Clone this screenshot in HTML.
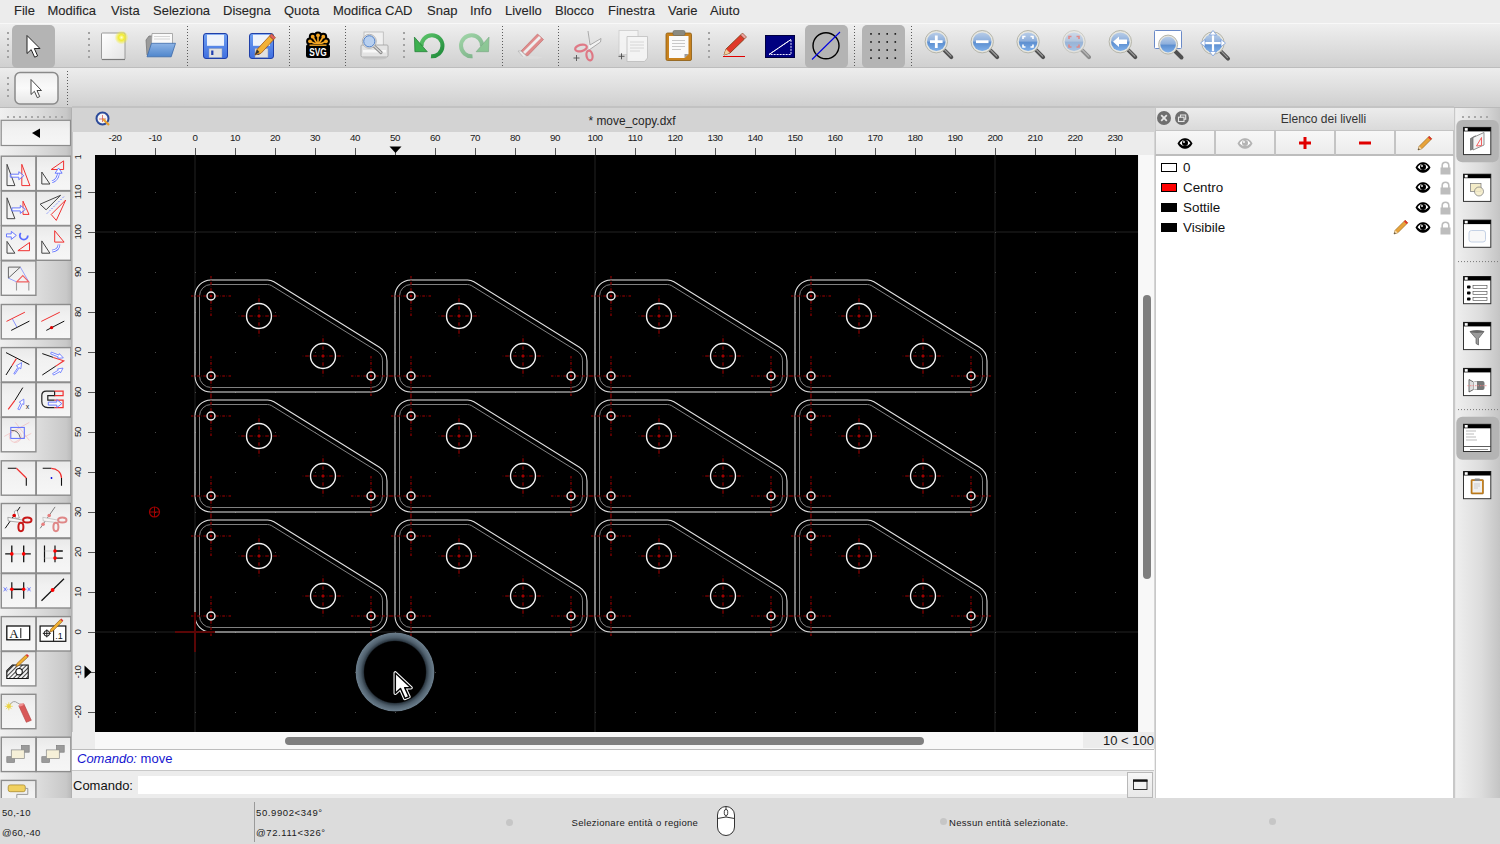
<!DOCTYPE html>
<html><head><meta charset="utf-8">
<style>
*{margin:0;padding:0;box-sizing:border-box}
html,body{width:1500px;height:844px;overflow:hidden;background:#ececec;font-family:"Liberation Sans",sans-serif;color:#222}
.a{position:absolute}
.menu{left:0;top:0;width:1500px;height:23px;background:#ececec}
.menu span{position:absolute;top:3px;font-size:13px;color:#262626;line-height:16px;-webkit-text-stroke:0.1px #262626}
.tb1{left:0;top:23px;width:1500px;height:45px;background:linear-gradient(#efefef,#e4e4e4 35%,#d0d0d0);border-top:1px solid #f8f8f8;border-bottom:1px solid #bdbdbd}
.tb2{left:0;top:68px;width:1500px;height:40px;background:linear-gradient(#ededed,#e0e0e0 45%,#cfcfcf);border-bottom:1px solid #bababa}
.sel{background:#b4b4b4;border-radius:5px}
.vsep{width:0;border-left:2px dotted #707070}
.grip{width:3px;background:radial-gradient(circle,#9a9a9a 1px,transparent 1.3px) 0 0/3px 6px}
.ldock{left:0;top:108px;width:72px;height:690px;background:linear-gradient(90deg,#efefef,#dcdcdc 60%,#c9c9c9)}
.lbtn{position:absolute;width:35px;height:35px;border:1.5px solid #8e8e8e;background:linear-gradient(#f3f3f3,#fbfbfb 45%,#ececec)}
.mdi{left:72px;top:108px;width:1083px;height:690px;background:#ececec}
.status{left:0;top:798px;width:1500px;height:46px;background:#dcdcdc;font-size:10.5px;color:#1a1a1a}
.rdock{left:1454px;top:108px;width:46px;height:690px;background:linear-gradient(90deg,#ededed,#dedede 50%,#cfcfcf);border-left:1px solid #cfcfcf}
.ldk{left:1155px;top:108px;width:299px;height:690px;background:#fff;border-left:1px solid #c8c8c8}
</style></head><body>
<div class="a menu">
<span style="left:14px">File</span><span style="left:47.5px">Modifica</span><span style="left:111px">Vista</span><span style="left:153px">Seleziona</span><span style="left:223px">Disegna</span><span style="left:284px">Quota</span><span style="left:333px">Modifica CAD</span><span style="left:427px">Snap</span><span style="left:470px">Info</span><span style="left:505px">Livello</span><span style="left:555px">Blocco</span><span style="left:608px">Finestra</span><span style="left:668px">Varie</span><span style="left:710px">Aiuto</span>
</div>
<div class="a tb1"></div>
<div class="a tb2"></div>
<svg class="a" style="left:0;top:0" width="1500" height="110">
<defs>
<linearGradient id="lens" x1="0" y1="0" x2="0" y2="1"><stop offset="0" stop-color="#b8cde8"/><stop offset="0.45" stop-color="#8fb0dc"/><stop offset="0.55" stop-color="#5d8fd0"/><stop offset="1" stop-color="#7fb0ea"/></linearGradient>
<linearGradient id="page" x1="0" y1="0" x2="1" y2="1"><stop offset="0" stop-color="#ffffff"/><stop offset="1" stop-color="#e4e4e4"/></linearGradient>
<linearGradient id="flop" x1="0" y1="0" x2="0" y2="1"><stop offset="0" stop-color="#6f9ff0"/><stop offset="1" stop-color="#3f6fe0"/></linearGradient>
<linearGradient id="folder" x1="0" y1="0" x2="0" y2="1"><stop offset="0" stop-color="#8fb5e6"/><stop offset="1" stop-color="#4f86cc"/></linearGradient>
<linearGradient id="undo" x1="0" y1="0" x2="1" y2="1"><stop offset="0" stop-color="#5cc46a"/><stop offset="1" stop-color="#1f8a3a"/></linearGradient>
<radialGradient id="sun" cx="0.5" cy="0.5" r="0.5"><stop offset="0" stop-color="#ffffd0"/><stop offset="0.4" stop-color="#f2ec30"/><stop offset="1" stop-color="#f2ec30" stop-opacity="0"/></radialGradient>
</defs>
<rect x="12" y="25" width="43" height="43" rx="5" fill="#b4b4b4"/>
<rect x="805" y="25" width="43" height="43" rx="5" fill="#b4b4b4"/>
<rect x="862" y="25" width="43" height="43" rx="5" fill="#b4b4b4"/>
<rect x="7" y="32" width="2" height="2" fill="#a2a2a2"/><rect x="7" y="38" width="2" height="2" fill="#a2a2a2"/><rect x="7" y="44" width="2" height="2" fill="#a2a2a2"/><rect x="7" y="50" width="2" height="2" fill="#a2a2a2"/><rect x="7" y="56" width="2" height="2" fill="#a2a2a2"/>
<rect x="88" y="32" width="2" height="2" fill="#a2a2a2"/><rect x="88" y="38" width="2" height="2" fill="#a2a2a2"/><rect x="88" y="44" width="2" height="2" fill="#a2a2a2"/><rect x="88" y="50" width="2" height="2" fill="#a2a2a2"/><rect x="88" y="56" width="2" height="2" fill="#a2a2a2"/>
<rect x="403" y="32" width="2" height="2" fill="#a2a2a2"/><rect x="403" y="38" width="2" height="2" fill="#a2a2a2"/><rect x="403" y="44" width="2" height="2" fill="#a2a2a2"/><rect x="403" y="50" width="2" height="2" fill="#a2a2a2"/><rect x="403" y="56" width="2" height="2" fill="#a2a2a2"/>
<rect x="708" y="32" width="2" height="2" fill="#a2a2a2"/><rect x="708" y="38" width="2" height="2" fill="#a2a2a2"/><rect x="708" y="44" width="2" height="2" fill="#a2a2a2"/><rect x="708" y="50" width="2" height="2" fill="#a2a2a2"/><rect x="708" y="56" width="2" height="2" fill="#a2a2a2"/>
<line x1="187.5" y1="26" x2="187.5" y2="66" stroke="#5a5a5a" stroke-width="1" stroke-dasharray="1 2"/>
<line x1="289.5" y1="26" x2="289.5" y2="66" stroke="#5a5a5a" stroke-width="1" stroke-dasharray="1 2"/>
<line x1="345.5" y1="26" x2="345.5" y2="66" stroke="#5a5a5a" stroke-width="1" stroke-dasharray="1 2"/>
<line x1="502.5" y1="26" x2="502.5" y2="66" stroke="#5a5a5a" stroke-width="1" stroke-dasharray="1 2"/>
<line x1="558.5" y1="26" x2="558.5" y2="66" stroke="#5a5a5a" stroke-width="1" stroke-dasharray="1 2"/>
<line x1="854.5" y1="26" x2="854.5" y2="66" stroke="#5a5a5a" stroke-width="1" stroke-dasharray="1 2"/>
<line x1="911.5" y1="26" x2="911.5" y2="66" stroke="#5a5a5a" stroke-width="1" stroke-dasharray="1 2"/>
<path d="M27 35.5V53.5L31.2 49.6L34.6 57.2L37.6 55.9L34.3 48.5H40Z" fill="#fff" stroke="#222" stroke-width="1" stroke-linejoin="round"/>
<rect x="101.5" y="33" width="23.5" height="26.5" rx="1" fill="url(#page)" stroke="#9a9a9a" stroke-width="1"/>
<path d="M102 59.5H125" stroke="#7a7a7a" stroke-width="1.2"/>
<circle cx="121.5" cy="37.5" r="7" fill="url(#sun)"/>
<path d="M146 40L149 36H158L160 38.5H171V55H147Z" fill="#9a9a9a" stroke="#777" stroke-width="0.8"/>
<path d="M152 33.5H172.5V52H151Z" fill="#fafafa" stroke="#999" stroke-width="0.8"/>
<path d="M154 36.5H170M154 39H170" stroke="#ccc" stroke-width="0.8"/>
<path d="M147 56.8L151.5 43.3H175.5L171.2 56.8Z" fill="url(#folder)" stroke="#3c6aa8" stroke-width="0.8"/>
<rect x="203.5" y="33.5" width="24" height="25" rx="2.5" fill="url(#flop)" stroke="#1f3fa8" stroke-width="1"/><rect x="207" y="34.8" width="17" height="11" fill="#eef3fb"/><rect x="209" y="48.5" width="13" height="9" fill="#e0e0e0" stroke="#8a9ab8" stroke-width="0.5"/><rect x="211.2" y="50.5" width="2.2" height="4.5" fill="#2040b0"/>
<rect x="249.5" y="33.5" width="24" height="25" rx="2.5" fill="url(#flop)" stroke="#1f3fa8" stroke-width="1"/><rect x="253" y="34.8" width="17" height="11" fill="#eef3fb"/><rect x="255" y="48.5" width="13" height="9" fill="#e0e0e0" stroke="#8a9ab8" stroke-width="0.5"/><rect x="257.2" y="50.5" width="2.2" height="4.5" fill="#2040b0"/>
<path d="M255 55L257 49.5L269.5 36L273.5 39.8L261 53.3Z" fill="#f2b136" stroke="#9a4a00" stroke-width="0.7"/><path d="M269.5 36L271.5 33.8L275.5 37.6L273.5 39.8Z" fill="#e06060" stroke="#9a4a00" stroke-width="0.6"/><path d="M255 55L257 49.5L259.5 52Z" fill="#333"/>
<g stroke="#000" stroke-width="2.6" stroke-linejoin="round"><path d="M318 45L310 41.3M318 45L312.7 36.7M318 45V35.3M318 45L323.3 36.7M318 45L326 41.3" stroke="#000" stroke-width="4.6" stroke-linecap="round"/><circle cx="310" cy="41.3" r="2.6" fill="#000"/><circle cx="312.7" cy="36.7" r="2.6" fill="#000"/><circle cx="318" cy="35.3" r="2.6" fill="#000"/><circle cx="323.3" cy="36.7" r="2.6" fill="#000"/><circle cx="326" cy="41.3" r="2.6" fill="#000"/></g>
<path d="M318 45L310 41.3M318 45L312.7 36.7M318 45V35.3M318 45L323.3 36.7M318 45L326 41.3" stroke="#f5a623" stroke-width="1.6" stroke-linecap="round"/><circle cx="310" cy="41.3" r="1.9" fill="#f5a623"/><circle cx="312.7" cy="36.7" r="1.9" fill="#f5a623"/><circle cx="318" cy="35.3" r="1.9" fill="#f5a623"/><circle cx="323.3" cy="36.7" r="1.9" fill="#f5a623"/><circle cx="326" cy="41.3" r="1.9" fill="#f5a623"/>
<path d="M306 46.5Q306 44 309 44H327Q330 44 330 46.5V55.5Q330 58 327 58H309Q306 58 306 55.5Z" fill="#000"/>
<path d="M309.5 45.2H326.5" stroke="#f5a623" stroke-width="1.4"/>
<text x="318" y="56" text-anchor="middle" font-family="Liberation Sans" font-weight="bold" font-size="10.5" fill="#fff" textLength="17.5" lengthAdjust="spacingAndGlyphs">SVG</text>
<rect x="364" y="32" width="19.3" height="14" fill="#f0f0f0" stroke="#b8b8b8" stroke-width="0.8"/>
<path d="M361 46Q361 45 362 45H387Q388 45 388 46V55.5Q388 57 386.5 57H362.5Q361 57 361 55.5Z" fill="#e4e4e4" stroke="#a0a0a0" stroke-width="0.8"/>
<rect x="363" y="50" width="23" height="2.5" fill="#f8f8f8"/><ellipse cx="374.5" cy="58.3" rx="12" ry="1.2" fill="#bbb" opacity="0.6"/>
<path d="M374.3 46.3L381 52.5" stroke="#888" stroke-width="3.2" stroke-linecap="round"/><path d="M374.3 46.3L381 52.5" stroke="#d8d8d8" stroke-width="1.2" stroke-linecap="round"/>
<circle cx="369.3" cy="41.3" r="7" fill="#e8e8e8" stroke="#a8a8a8" stroke-width="0.8"/><circle cx="369.3" cy="41.3" r="5.6" fill="#b8d0f0" stroke="#5080c8" stroke-width="1"/>
<path d="M421.5 46.5A10.5 10.5 0 1 1 431 56.2" fill="none" stroke="url(#undo)" stroke-width="4"/>
<path d="M414.4 37.1L414.9 51.7L427.3 51.7Z" fill="#3cb04e" stroke="#1f7a33" stroke-width="0.7" stroke-linejoin="round"/>
<g opacity="0.5"><path d="M482 46.5A10.5 10.5 0 1 0 472.5 56.2" fill="none" stroke="url(#undo)" stroke-width="4"/><path d="M489 37.1L488.5 51.7L476.2 51.7Z" fill="#3cb04e" stroke="#1f7a33" stroke-width="0.7" stroke-linejoin="round"/></g>
<g opacity="0.75"><path d="M521 51L537.5 34L543.5 39.5L527 56.5Z" fill="#e07070" stroke="#b04040" stroke-width="0.6"/><path d="M523 52L539 36L541 38L525 54Z" fill="#f4f4f4"/><path d="M518 51L521 51L527 56.5L524 58Z" fill="#f0f0f0" stroke="#999" stroke-width="0.6"/><ellipse cx="531" cy="57.5" rx="11" ry="1.5" fill="#ddd"/></g>
<g opacity="0.8"><path d="M588 31L590 45L601 38.5L600.5 42L589 50" fill="#f8f8f8" stroke="#888" stroke-width="0.8"/><ellipse cx="581" cy="48" rx="6" ry="3.2" transform="rotate(-15 581 48)" fill="none" stroke="#e06070" stroke-width="2.2"/><ellipse cx="589.5" cy="55.5" rx="3" ry="5" transform="rotate(-10 589.5 55.5)" fill="none" stroke="#e06070" stroke-width="2.2"/><path d="M573.5 58H579.5M576.5 55V61" stroke="#333" stroke-width="0.9"/></g>
<g opacity="0.85"><rect x="619" y="30.5" width="19" height="24" fill="#f6f6f6" stroke="#c8c8c8" stroke-width="0.8"/><path d="M627 36.5H647.5V58L644.5 61.5H627Z" fill="#f8f8f8" stroke="#b8b8b8" stroke-width="0.8"/><path d="M630 42H644M630 45H644M630 48H644M630 51H640" stroke="#ccc" stroke-width="0.8"/><path d="M618.5 56.3H624.5M621.5 53.3V59.3" stroke="#333" stroke-width="0.9"/></g>
<rect x="666" y="33" width="25.5" height="27.5" rx="1.5" fill="#c8821e" stroke="#8a5a10" stroke-width="0.8"/><path d="M669 36H688.5V54L684.5 58H669Z" fill="#fafafa"/><path d="M684.5 58L688.5 54H684.5Z" fill="#9a9a9a"/><path d="M672 40.5H685M672 43.5H685M672 46.5H685M672 49.5H681" stroke="#bbb" stroke-width="0.8"/><rect x="673" y="30.5" width="12" height="5" rx="1.5" fill="#8a8a80" stroke="#6a6a60" stroke-width="0.6"/>
<path d="M724 55L726 49L740.5 35L744.5 39L730 53Z" fill="#e03a2a" stroke="#7a3a10" stroke-width="0.8"/><path d="M740.5 35L742.5 33L746.5 37L744.5 39Z" fill="#f0a0a0" stroke="#7a3a10" stroke-width="0.6"/><path d="M724 55L726 49L730 53Z" fill="#f0d0a0"/><path d="M723 56.5H745" stroke="#e00000" stroke-width="1"/>
<rect x="765.5" y="35.5" width="29" height="22" fill="#000080" stroke="#000040" stroke-width="1"/><path d="M769 54.5L791 39.5V54.5Z" fill="none" stroke="#e8e8ff" stroke-width="1" stroke-dasharray="2 1"/><path d="M769 54.5L791 39.5" stroke="#fff" stroke-width="1"/>
<circle cx="826" cy="45.7" r="13" fill="none" stroke="#000" stroke-width="1.4"/><path d="M812 59.5L840 32" stroke="#0000e0" stroke-width="1.1"/>
<rect x="870.2" y="33.1" width="1.6" height="1.6" fill="#111"/>
<rect x="870.2" y="41.17" width="1.6" height="1.6" fill="#111"/>
<rect x="870.2" y="49.24" width="1.6" height="1.6" fill="#111"/>
<rect x="870.2" y="57.31" width="1.6" height="1.6" fill="#111"/>
<rect x="878.3000000000001" y="33.1" width="1.6" height="1.6" fill="#111"/>
<rect x="878.3000000000001" y="41.17" width="1.6" height="1.6" fill="#111"/>
<rect x="878.3000000000001" y="49.24" width="1.6" height="1.6" fill="#111"/>
<rect x="878.3000000000001" y="57.31" width="1.6" height="1.6" fill="#111"/>
<rect x="886.4000000000001" y="33.1" width="1.6" height="1.6" fill="#111"/>
<rect x="886.4000000000001" y="41.17" width="1.6" height="1.6" fill="#111"/>
<rect x="886.4000000000001" y="49.24" width="1.6" height="1.6" fill="#111"/>
<rect x="886.4000000000001" y="57.31" width="1.6" height="1.6" fill="#111"/>
<rect x="894.5" y="33.1" width="1.6" height="1.6" fill="#111"/>
<rect x="894.5" y="41.17" width="1.6" height="1.6" fill="#111"/>
<rect x="894.5" y="49.24" width="1.6" height="1.6" fill="#111"/>
<rect x="894.5" y="57.31" width="1.6" height="1.6" fill="#111"/>
<g><path d="M944.3 50.2 L951.3 57.2" stroke="#505050" stroke-width="4" stroke-linecap="round"/><path d="M944.8 50.0 L950.8 56.2" stroke="#9a9a9a" stroke-width="1.2" stroke-linecap="round"/><circle cx="936.3" cy="41.7" r="11.2" fill="#e6e6e0" stroke="#b5b5aa" stroke-width="1"/><circle cx="936.3" cy="41.7" r="9.3" fill="url(#lens)"/><path d="M936.3 35.5V48M930 41.7H942.6" stroke="#fff" stroke-width="2.8"/></g>
<g><path d="M990.2 50.2 L997.2 57.2" stroke="#505050" stroke-width="4" stroke-linecap="round"/><path d="M990.7 50.0 L996.7 56.2" stroke="#9a9a9a" stroke-width="1.2" stroke-linecap="round"/><circle cx="982.2" cy="41.7" r="11.2" fill="#e6e6e0" stroke="#b5b5aa" stroke-width="1"/><circle cx="982.2" cy="41.7" r="9.3" fill="url(#lens)"/><path d="M976 41.7H988.5" stroke="#fff" stroke-width="2.8"/></g>
<g><path d="M1036.1 50.2 L1043.1 57.2" stroke="#505050" stroke-width="4" stroke-linecap="round"/><path d="M1036.6 50.0 L1042.6 56.2" stroke="#9a9a9a" stroke-width="1.2" stroke-linecap="round"/><circle cx="1028.1" cy="41.7" r="11.2" fill="#e6e6e0" stroke="#b5b5aa" stroke-width="1"/><circle cx="1028.1" cy="41.7" r="9.3" fill="url(#lens)"/><path d="M1023 39V36.5H1025.5M1030.5 36.5H1033V39M1033 44.5V47H1030.5M1025.5 47H1023V44.5" fill="none" stroke="#fff" stroke-width="1.6"/></g>
<g opacity="0.55"><path d="M1082 50.2 L1089 57.2" stroke="#505050" stroke-width="4" stroke-linecap="round"/><path d="M1082.5 50.0 L1088.5 56.2" stroke="#9a9a9a" stroke-width="1.2" stroke-linecap="round"/><circle cx="1074" cy="41.7" r="11.2" fill="#e6e6e0" stroke="#b5b5aa" stroke-width="1"/><circle cx="1074" cy="41.7" r="9.3" fill="url(#lens)"/><path d="M1069 39V36.5H1071.5M1076.5 36.5H1079V39M1079 44.5V47H1076.5M1071.5 47H1069V44.5" fill="none" stroke="#e04040" stroke-width="1.6"/></g>
<g><path d="M1128.3 50.2 L1135.3 57.2" stroke="#505050" stroke-width="4" stroke-linecap="round"/><path d="M1128.8 50.0 L1134.8 56.2" stroke="#9a9a9a" stroke-width="1.2" stroke-linecap="round"/><circle cx="1120.3" cy="41.7" r="11.2" fill="#e6e6e0" stroke="#b5b5aa" stroke-width="1"/><circle cx="1120.3" cy="41.7" r="9.3" fill="url(#lens)"/><path d="M1113 41.7L1119 36.5V39.5H1127V44H1119V47Z" fill="#fff"/></g>
<rect x="1154.5" y="30.5" width="27" height="18" rx="1" fill="#fff" stroke="#6a8ac8" stroke-width="1"/>
<path d="M1175.5 51.5L1181.5 57.5" stroke="#505050" stroke-width="4" stroke-linecap="round"/>
<circle cx="1168.1" cy="44.6" r="9.5" fill="#e6e6e0" stroke="#b5b5aa" stroke-width="1"/><circle cx="1168.1" cy="44.6" r="7.8" fill="url(#lens)"/>
<g><path d="M1221 51.6 L1228 58.6" stroke="#505050" stroke-width="4" stroke-linecap="round"/><path d="M1221.5 51.400000000000006 L1227.5 57.6" stroke="#9a9a9a" stroke-width="1.2" stroke-linecap="round"/><circle cx="1213" cy="43.1" r="11.2" fill="#e6e6e0" stroke="#b5b5aa" stroke-width="1"/><circle cx="1213" cy="43.1" r="9.3" fill="url(#lens)"/><path d="M1213 32V54.5M1202 43.1H1224.5" stroke="#fff" stroke-width="2.2"/><path d="M1213 30.5L1209.5 35H1216.5ZM1213 56L1209.5 51.5H1216.5ZM1200.5 43.1L1205 39.6V46.6ZM1225.5 43.1L1221 39.6V46.6Z" fill="#fff" stroke="#5a8ad8" stroke-width="0.6"/></g>
<rect x="7" y="77" width="2" height="2" fill="#a2a2a2"/><rect x="7" y="83" width="2" height="2" fill="#a2a2a2"/><rect x="7" y="89" width="2" height="2" fill="#a2a2a2"/><rect x="7" y="95" width="2" height="2" fill="#a2a2a2"/>
<rect x="15" y="72.5" width="43" height="31.5" rx="5" fill="url(#tb2b)" stroke="#8a8a8a" stroke-width="1.5"/>
<defs><linearGradient id="tb2b" x1="0" y1="0" x2="0" y2="1"><stop offset="0" stop-color="#efefef"/><stop offset="0.5" stop-color="#fafafa"/><stop offset="1" stop-color="#e6e6e6"/></linearGradient></defs>
<path d="M31 79.5V94.5L34.4 91.3L37.3 97.7L39.7 96.6L37 90.5H41.5Z" fill="#fff" stroke="#333" stroke-width="0.9" stroke-linejoin="round"/>
<line x1="67.5" y1="71" x2="67.5" y2="105" stroke="#5a5a5a" stroke-width="1" stroke-dasharray="1 2"/>
</svg>
<div class="a ldock"></div>
<svg class="a" style="left:0;top:108px" width="72" height="690" viewBox="0 108 72 690">
<defs><linearGradient id="lbg" x1="0" y1="0" x2="0" y2="1"><stop offset="0" stop-color="#e9e9e9"/><stop offset="0.35" stop-color="#f1f1f1"/><stop offset="1" stop-color="#f6f6f6"/></linearGradient><linearGradient id="dockbg" x1="0" y1="0" x2="1" y2="0"><stop offset="0" stop-color="#f0f0f0"/><stop offset="0.5" stop-color="#dedede"/><stop offset="0.92" stop-color="#c8c8c8"/><stop offset="1" stop-color="#b8b8b8"/></linearGradient></defs>
<rect x="0" y="108" width="72" height="690" fill="url(#dockbg)"/>
<rect x="7" y="116" width="2" height="2" fill="#a8a8a8"/>
<rect x="13" y="116" width="2" height="2" fill="#a8a8a8"/>
<rect x="19" y="116" width="2" height="2" fill="#a8a8a8"/>
<rect x="25" y="116" width="2" height="2" fill="#a8a8a8"/>
<rect x="31" y="116" width="2" height="2" fill="#a8a8a8"/>
<rect x="37" y="116" width="2" height="2" fill="#a8a8a8"/>
<rect x="43" y="116" width="2" height="2" fill="#a8a8a8"/>
<rect x="49" y="116" width="2" height="2" fill="#a8a8a8"/>
<rect x="55" y="116" width="2" height="2" fill="#a8a8a8"/>
<rect x="61" y="116" width="2" height="2" fill="#a8a8a8"/>
<rect x="1.2" y="120.3" width="69.3" height="25.2" fill="url(#lbg)" stroke="#8c8c8c" stroke-width="1.2"/>
<path d="M32 133L40 128.5V138Z" fill="#000"/>
<rect x="1.3" y="156.2" width="34.6" height="34.4" fill="url(#lbg)" stroke="#8c8c8c" stroke-width="1.4"/>
<g transform="translate(1.3 156.2)"><path d="M5.7 8.1V29.4H13.6Z" fill="none" stroke="#444" stroke-width="1"/><path d="M20.5 8.1V29.4H28.6Z" fill="none" stroke="#f03030" stroke-width="1"/><path d="M9 18.0H17.5V15.5L22.5 19.5L17.5 23.5V21.0H9Z" fill="#fff" fill-opacity="0.6" stroke="#5a6cff" stroke-width="0.9" opacity="1"/></g>
<rect x="36.3" y="156.2" width="34.6" height="34.4" fill="url(#lbg)" stroke="#8c8c8c" stroke-width="1.4"/>
<g transform="translate(36.3 156.2)"><path d="M5.5 15.8V27.8H13.6Z" fill="none" stroke="#444" stroke-width="1"/><path d="M14.9 13.3L27.3 4.7V13.3Z" fill="none" stroke="#f03030" stroke-width="1"/><path d="M15.8 25.5Q21.5 24 22.3 16.5" fill="none" stroke="#5a6cff" stroke-width="2.6"/><path d="M15.8 25.5Q21.5 24 22.3 16.5" fill="none" stroke="#fff" stroke-width="1.2"/><path d="M18.8 17L22.3 11.8L25.8 17Z" fill="#fff" stroke="#5a6cff" stroke-width="0.9"/></g>
<rect x="1.3" y="191.1" width="34.6" height="34.4" fill="url(#lbg)" stroke="#8c8c8c" stroke-width="1.4"/>
<g transform="translate(1.3 191.1)"><path d="M5.7 6.7V27.6H13.6Z" fill="none" stroke="#444" stroke-width="1"/><path d="M21.7 10.1V23.3H27.7Z" fill="none" stroke="#f03030" stroke-width="1"/><path d="M10.6 16.8H19V14.3L24 18.3L19 22.3V19.8H10.6Z" fill="#fff" fill-opacity="0.6" stroke="#5a6cff" stroke-width="0.9" opacity="1"/></g>
<rect x="36.3" y="191.1" width="34.6" height="34.4" fill="url(#lbg)" stroke="#8c8c8c" stroke-width="1.4"/>
<g transform="translate(36.3 191.1)"><path d="M3.8 13.1L24.3 4.2L9.8 18.7Z" fill="none" stroke="#444" stroke-width="1"/><path d="M29.4 8.9L14.9 23.4L20 29.3Z" fill="none" stroke="#f03030" stroke-width="1"/><path d="M10.6 22.5L27.7 5.4" stroke="#5a6cff" stroke-width="0.9" stroke-dasharray="1.6 1.6"/></g>
<rect x="1.3" y="225.9" width="34.6" height="34.4" fill="url(#lbg)" stroke="#8c8c8c" stroke-width="1.4"/>
<g transform="translate(1.3 225.9)"><path d="M5.2 8.0H10V5.5L15 9.5L10 13.5V11.0H5.2Z" fill="#fff" fill-opacity="0.6" stroke="#5a6cff" stroke-width="0.9" opacity="1"/><circle cx="22.5" cy="9.7" r="4" fill="none" stroke="#5a6cff" stroke-width="1.8" stroke-dasharray="15 10"/><path d="M5.7 15.5V27.3H13.6Z" fill="none" stroke="#444" stroke-width="1"/><path d="M16.6 24.8L28.2 16.6V24.8Z" fill="none" stroke="#f03030" stroke-width="1"/></g>
<rect x="36.3" y="225.9" width="34.6" height="34.4" fill="url(#lbg)" stroke="#8c8c8c" stroke-width="1.4"/>
<g transform="translate(36.3 225.9)"><path d="M5.5 15V27.3H13.6Z" fill="none" stroke="#444" stroke-width="1"/><path d="M18.4 4.8V16.2H27.8Z" fill="none" stroke="#f03030" stroke-width="1"/><path d="M15.8 25.2Q22.7 24 22.7 18.5" fill="none" stroke="#5a6cff" stroke-width="2.6"/><path d="M15.8 25.2Q22.7 24 22.7 18.5" fill="none" stroke="#fff" stroke-width="1.1"/></g>
<rect x="1.3" y="260.9" width="34.6" height="34.4" fill="url(#lbg)" stroke="#8c8c8c" stroke-width="1.4"/>
<g transform="translate(1.3 260.9)"><path d="M7.1 6.2H19L7.1 17.2Z" fill="none" stroke="#666" stroke-width="1"/><path d="M19 6.2L27.5 21M7.1 17.2L15.4 21" stroke="#5a6cff" stroke-width="0.6"/><path d="M15.4 21L21.5 14.7L27.5 21Z" fill="none" stroke="#f06060" stroke-width="1.1"/><path d="M15.2 21.6V29.5M27.5 21.6V29.5" stroke="#999" stroke-width="1.1"/></g>
<rect x="1.3" y="304.5" width="34.6" height="34.4" fill="url(#lbg)" stroke="#8c8c8c" stroke-width="1.4"/>
<g transform="translate(1.3 304.5)"><path d="M5.2 16.9L23.6 7.7" stroke="#f03030" stroke-width="1"/><path d="M9.9 25.9L28.1 16.6" stroke="#111" stroke-width="1"/><path d="M11.1 14.4L15.6 22.6" stroke="#5a6cff" stroke-width="0.7"/></g>
<rect x="36.3" y="304.5" width="34.6" height="34.4" fill="url(#lbg)" stroke="#8c8c8c" stroke-width="1.4"/>
<g transform="translate(36.3 304.5)"><path d="M5 16.9L23.5 7.7" stroke="#f03030" stroke-width="1"/><path d="M10 25.9L28 16.6" stroke="#111" stroke-width="1"/><circle cx="15.3" cy="23.1" r="1.7" fill="#e00000"/></g>
<rect x="1.3" y="347.6" width="34.6" height="34.4" fill="url(#lbg)" stroke="#8c8c8c" stroke-width="1.4"/>
<g transform="translate(1.3 347.6)"><path d="M4.7 5L28.1 17M4.7 27.4L10.7 17.9" stroke="#111" stroke-width="1"/><path d="M10.7 17.9L15.1 11" stroke="#f03030" stroke-width="1.1"/><path d="M12.5 26L16.8 19.5L15 18.2L20.3 15L19.5 21.2L17.9 20.1L13.6 26.6Z" fill="#fff" stroke="#5a6cff" stroke-width="0.8"/></g>
<rect x="36.3" y="347.6" width="34.6" height="34.4" fill="url(#lbg)" stroke="#8c8c8c" stroke-width="1.4"/>
<g transform="translate(36.3 347.6)"><path d="M6 6L17 9.8M19.5 18.5L6 27.4" stroke="#111" stroke-width="1"/><path d="M17 9.8L27.5 13.2L19.5 18.5" fill="none" stroke="#f03030" stroke-width="1.1"/><path d="M15 4.5L22.6 7.5L23.1 6L27 10.3L21.4 10.7L21.9 9.3L14.4 6.3Z" fill="#fff" stroke="#5a6cff" stroke-width="0.8"/><path d="M16.3 26L22 22.6L21.3 21.3L26.7 20.5L24.2 25.2L23.5 24L17.3 27.5Z" fill="#fff" stroke="#5a6cff" stroke-width="0.8"/></g>
<rect x="1.3" y="382.6" width="34.6" height="34.4" fill="url(#lbg)" stroke="#8c8c8c" stroke-width="1.4"/>
<g transform="translate(1.3 382.6)"><path d="M21.5 5L13.6 17.8" stroke="#111" stroke-width="1"/><path d="M13.6 17.8L6.9 26.8" stroke="#f03030" stroke-width="1.1"/><path d="M16.5 26.5L19.5 20.5L17.9 19.6L22.5 16.5L22.6 21.8L21 21.2L18.3 27.1Z" fill="#fff" stroke="#5a6cff" stroke-width="0.8"/><text x="24.5" y="26" font-family="Liberation Sans" font-size="7" fill="#222">x</text></g>
<rect x="36.3" y="382.6" width="34.6" height="34.4" fill="url(#lbg)" stroke="#8c8c8c" stroke-width="1.4"/>
<g transform="translate(36.3 382.6)"><path d="M18.3 8.5H10Q5.5 8.5 5.5 13V19Q5.5 25 11.5 25H18.3" fill="none" stroke="#222" stroke-width="1.2"/><path d="M18.3 8.5V13H11.5V17.5H18.3" fill="none" stroke="#222" stroke-width="1.2"/><path d="M18.3 8.5H26.8V13H18.3M18.3 17.5H26.8V25H18.3" fill="none" stroke="#f03030" stroke-width="1.2"/><path d="M12 19.5H20.5V17L25.5 21L20.5 25V22.5H12Z" fill="#fff" fill-opacity="0.6" stroke="#5a6cff" stroke-width="0.9" opacity="1"/></g>
<rect x="1.3" y="417.4" width="34.6" height="34.4" fill="url(#lbg)" stroke="#8c8c8c" stroke-width="1.4"/>
<g transform="translate(1.3 417.4)"><g opacity="0.45"><path d="M3 19L28 5M13 25L30 16M14 5L28 23" stroke="#f08080" stroke-width="0.7"/><circle cx="14" cy="19" r="6" fill="none" stroke="#f08080" stroke-width="0.7"/></g><rect x="9.5" y="10" width="13.5" height="11" fill="none" stroke="#5a6cff" stroke-width="1"/><path d="M10 13Q17 12.5 19 20.5" fill="none" stroke="#555" stroke-width="0.9"/></g>
<rect x="1.3" y="460.8" width="34.6" height="34.4" fill="url(#lbg)" stroke="#8c8c8c" stroke-width="1.4"/>
<g transform="translate(1.3 460.8)"><path d="M6.5 7.5H15.1M25 17.2V25" stroke="#111" stroke-width="1.1"/><path d="M15.1 7.5L25 17.2" stroke="#f03030" stroke-width="1.2"/></g>
<rect x="36.3" y="460.8" width="34.6" height="34.4" fill="url(#lbg)" stroke="#8c8c8c" stroke-width="1.4"/>
<g transform="translate(36.3 460.8)"><path d="M6.4 7.5H14.9M25.2 17.2V25" stroke="#111" stroke-width="1.1"/><path d="M14.9 7.5A10.3 9.7 0 0 1 25.2 17.2" fill="none" stroke="#f03030" stroke-width="1.2"/><circle cx="15.2" cy="17.2" r="0.9" fill="#0000e0"/></g>
<rect x="1.3" y="503.5" width="34.6" height="34.4" fill="url(#lbg)" stroke="#8c8c8c" stroke-width="1.4"/>
<g transform="translate(1.3 503.5)"><g opacity="1"><path d="M3.9 24.8L18.8 3.4" stroke="#111" stroke-width="1"/><path d="M13 8L15.5 6.5L18 14.5L14.5 14.8Z" fill="#fff" stroke="#777" stroke-width="0.6"/><path d="M6.5 13.8L22.5 16.8L22.2 19.2L7 17.5Z" fill="#f8f8f8" stroke="#777" stroke-width="0.6"/><circle cx="12.9" cy="12" r="1.8" fill="#e00000"/><ellipse cx="26" cy="16.5" rx="4.2" ry="2.6" fill="none" stroke="#c81818" stroke-width="2"/><ellipse cx="19.6" cy="23.5" rx="2.5" ry="4.2" fill="none" stroke="#c81818" stroke-width="2"/></g></g>
<rect x="36.3" y="503.5" width="34.6" height="34.4" fill="url(#lbg)" stroke="#8c8c8c" stroke-width="1.4"/>
<g transform="translate(36.3 503.5)"><g opacity="0.55"><path d="M3.9 24.8L18.8 3.4" stroke="#222" stroke-width="1"/><path d="M6.5 13.8L22.5 16.8L22.2 19.2L7 17.5Z" fill="#f8f8f8" stroke="#777" stroke-width="0.6"/><circle cx="12.9" cy="12" r="1.8" fill="#e02020"/><circle cx="6.8" cy="20.7" r="1.8" fill="#e02020"/><ellipse cx="26" cy="16.5" rx="4.2" ry="2.6" fill="none" stroke="#d03030" stroke-width="2"/><ellipse cx="19.6" cy="23.5" rx="2.5" ry="4.2" fill="none" stroke="#d03030" stroke-width="2"/></g></g>
<rect x="1.3" y="538.6" width="34.6" height="34.4" fill="url(#lbg)" stroke="#8c8c8c" stroke-width="1.4"/>
<g transform="translate(1.3 538.6)"><path d="M10.5 7V23.6M22.4 7V23.6M3.9 15.3H10.5M22.4 15.3H29.5" stroke="#111" stroke-width="1.3"/><path d="M10.5 15.3H22.4" stroke="#aaa" stroke-width="0.7"/><circle cx="10.5" cy="15.3" r="1.8" fill="#f00"/><circle cx="22.4" cy="15.3" r="1.8" fill="#f00"/></g>
<rect x="36.3" y="538.6" width="34.6" height="34.4" fill="url(#lbg)" stroke="#8c8c8c" stroke-width="1.4"/>
<g transform="translate(36.3 538.6)"><path d="M8.2 7V23.6M18.7 7V23.6" stroke="#111" stroke-width="1.2"/><path d="M8.2 12.4H18.7M8.2 19.5H18.7" stroke="#aaa" stroke-width="0.8" stroke-dasharray="1 1"/><path d="M18.7 12.4H26.5M18.7 19.5H26.5" stroke="#111" stroke-width="1.3"/><circle cx="18.7" cy="12.4" r="1.8" fill="#f00"/><circle cx="18.7" cy="19.5" r="1.8" fill="#f00"/></g>
<rect x="1.3" y="573.6" width="34.6" height="34.4" fill="url(#lbg)" stroke="#8c8c8c" stroke-width="1.4"/>
<g transform="translate(1.3 573.6)"><path d="M10.5 8.6V25.2M22.4 8.6V25.2" stroke="#111" stroke-width="1.2"/><path d="M10.5 15.7H22.4" stroke="#111" stroke-width="1.6"/><path d="M3.9 15.7H10.5M22.4 15.7H29" stroke="#5a6cff" stroke-width="0.6" stroke-dasharray="1 1"/><path d="M2.4 13.7l3 4M5.4 13.7l-3 4M26.2 13.7l3 4M29.2 13.7l-3 4" stroke="#5a6cff" stroke-width="0.8"/><circle cx="10.5" cy="15.7" r="1.8" fill="#f00"/><circle cx="22.4" cy="15.7" r="1.8" fill="#f00"/></g>
<rect x="36.3" y="573.6" width="34.6" height="34.4" fill="url(#lbg)" stroke="#8c8c8c" stroke-width="1.4"/>
<g transform="translate(36.3 573.6)"><path d="M5.2 27.1L27.7 5.1" stroke="#111" stroke-width="1.2"/><circle cx="16.3" cy="16.4" r="1.9" fill="#f00"/></g>
<rect x="1.3" y="616.6" width="34.6" height="34.4" fill="url(#lbg)" stroke="#8c8c8c" stroke-width="1.4"/>
<g transform="translate(1.3 616.6)"><rect x="5.5" y="9.4" width="22.9" height="13.8" fill="#fff" stroke="#111" stroke-width="1.3"/><text x="8" y="21" font-family="Liberation Serif" font-size="13" fill="#111">A</text><path d="M19.5 11.5V21.5" stroke="#111" stroke-width="1"/></g>
<rect x="36.3" y="616.6" width="34.6" height="34.4" fill="url(#lbg)" stroke="#8c8c8c" stroke-width="1.4"/>
<g transform="translate(36.3 616.6)"><rect x="3.8" y="9.4" width="25.7" height="15.3" fill="#fff" stroke="#111" stroke-width="1.2"/><path d="M17.3 9.4V24.7" stroke="#111" stroke-width="1"/><circle cx="10.5" cy="16.8" r="2.8" fill="none" stroke="#111" stroke-width="1"/><path d="M6.5 16.8H14.5M10.5 12.8V20.8" stroke="#111" stroke-width="0.9"/><text x="19" y="22" font-family="Liberation Sans" font-size="9" fill="#111">.1</text><path d="M13.5 15.5L14.5 12.5L24 3L26 5L16.5 14.5Z" fill="#f0b030" stroke="#8a5010" stroke-width="0.6"/><path d="M24 3L25 2L27 4L26 5Z" fill="#e03030"/></g>
<rect x="1.3" y="651.5" width="34.6" height="34.4" fill="url(#lbg)" stroke="#8c8c8c" stroke-width="1.4"/>
<g transform="translate(1.3 651.5)"><defs><pattern id="hp" width="3" height="3" patternUnits="userSpaceOnUse" patternTransform="rotate(45)"><rect width="1" height="3" fill="#444"/></pattern></defs><path d="M5.5 19.1L11.1 13.5H26.9V27H5.5Z" fill="url(#hp)" stroke="#111" stroke-width="1.1"/><circle cx="17.8" cy="20.2" r="3.2" fill="#fff" stroke="#111" stroke-width="1.1"/><path d="M14.5 15L15.6 12L24.5 3.5L26.6 5.6L17.6 14Z" fill="#f0b030" stroke="#8a5010" stroke-width="0.6"/><path d="M24.5 3.5L25.7 2.4L27.8 4.5L26.6 5.6Z" fill="#e03030"/></g>
<rect x="1.3" y="694.3" width="34.6" height="34.4" fill="url(#lbg)" stroke="#8c8c8c" stroke-width="1.4"/>
<g transform="translate(1.3 694.3)"><path d="M8 11Q12 5 16 8.5Q18 10 20 10" fill="none" stroke="#999" stroke-width="0.9"/><circle cx="7.5" cy="12" r="2.2" fill="#f4e060"/><path d="M3.5 12H11.5M7.5 8V16M4.7 9.2L10.3 14.8M10.3 9.2L4.7 14.8" stroke="#e8d040" stroke-width="0.7"/><path d="M17.5 11.5L22.5 9.5L30 26L25 28Z" fill="#d85858" stroke="#b04040" stroke-width="0.6"/><ellipse cx="20" cy="10.5" rx="2.7" ry="1.3" transform="rotate(-22 20 10.5)" fill="#f09090"/></g>
<rect x="1.3" y="737.2" width="34.6" height="34.4" fill="url(#lbg)" stroke="#8c8c8c" stroke-width="1.4"/>
<g transform="translate(1.3 737.2)"><rect x="20.1" y="8.2" width="7.8" height="6.8" fill="#9a9a9a" stroke="#777" stroke-width="0.6"/><rect x="5.5" y="19.5" width="7.8" height="5.8" fill="#9a9a9a" stroke="#777" stroke-width="0.6"/><rect x="10" y="12.7" width="13" height="8.7" fill="#f6f0d8" stroke="#888" stroke-width="0.7"/></g>
<rect x="36.3" y="737.2" width="34.6" height="34.4" fill="url(#lbg)" stroke="#8c8c8c" stroke-width="1.4"/>
<g transform="translate(36.3 737.2)"><rect x="20.1" y="8.2" width="7.8" height="6.8" fill="#9a9a9a" stroke="#777" stroke-width="0.6"/><rect x="5.5" y="19.5" width="7.8" height="5.8" fill="#9a9a9a" stroke="#777" stroke-width="0.6"/><rect x="10" y="12.7" width="13" height="8.7" fill="#f6f0d8" stroke="#888" stroke-width="0.7"/></g>
<rect x="1.3" y="780.4" width="34.6" height="34.4" fill="url(#lbg)" stroke="#8c8c8c" stroke-width="1.4"/>
<g transform="translate(1.3 780.4)"><rect x="6.9" y="4.5" width="17.1" height="6.8" rx="2" fill="#f0d060" stroke="#a08020" stroke-width="0.7"/><path d="M24 8H26.5V14H15.5V18" fill="none" stroke="#999" stroke-width="1"/></g>
<rect x="71" y="108" width="1" height="690" fill="#b0b0b0"/>
</svg>
<div class="a mdi">
</div>
<div class="a" style="left:72px;top:106px;width:1083px;height:2px;background:#c2c2c2"></div>
<div class="a" style="left:72px;top:108px;width:1083px;height:24px;background:#d3d3d3"></div>
<div class="a" style="left:72px;top:113px;width:1083px;text-align:center;font-size:11.9px;color:#262626;line-height:16px;padding-left:37px">* move_copy.dxf</div>
<svg class="a" style="left:95px;top:111px" width="16" height="16"><circle cx="7.5" cy="7.5" r="6" fill="#f4f4f4" stroke="#2b4a9a" stroke-width="2"/><path d="M4 8h7M7.5 4v7" stroke="#c44" stroke-width="0.7"/><path d="M8 8l6 6" stroke="#e8a030" stroke-width="2.2"/></svg>
<div class="a" style="left:72px;top:132px;width:1083px;height:23px;background:#ececec"></div>
<div class="a" style="left:72px;top:132px;width:23px;height:600px;background:#ececec;border-left:1px solid #c8c8c8"></div>
<div class="a" style="left:115px;top:148px;width:1px;height:7px;background:#555"></div>
<div class="a" style="left:95px;width:40px;text-align:center;font-size:9.8px;letter-spacing:-0.4px;line-height:12px;color:#1a1a1a;top:132px">-20</div>
<div class="a" style="left:155px;top:148px;width:1px;height:7px;background:#555"></div>
<div class="a" style="left:135px;width:40px;text-align:center;font-size:9.8px;letter-spacing:-0.4px;line-height:12px;color:#1a1a1a;top:132px">-10</div>
<div class="a" style="left:195px;top:148px;width:1px;height:7px;background:#555"></div>
<div class="a" style="left:175px;width:40px;text-align:center;font-size:9.8px;letter-spacing:-0.4px;line-height:12px;color:#1a1a1a;top:132px">0</div>
<div class="a" style="left:235px;top:148px;width:1px;height:7px;background:#555"></div>
<div class="a" style="left:215px;width:40px;text-align:center;font-size:9.8px;letter-spacing:-0.4px;line-height:12px;color:#1a1a1a;top:132px">10</div>
<div class="a" style="left:275px;top:148px;width:1px;height:7px;background:#555"></div>
<div class="a" style="left:255px;width:40px;text-align:center;font-size:9.8px;letter-spacing:-0.4px;line-height:12px;color:#1a1a1a;top:132px">20</div>
<div class="a" style="left:315px;top:148px;width:1px;height:7px;background:#555"></div>
<div class="a" style="left:295px;width:40px;text-align:center;font-size:9.8px;letter-spacing:-0.4px;line-height:12px;color:#1a1a1a;top:132px">30</div>
<div class="a" style="left:355px;top:148px;width:1px;height:7px;background:#555"></div>
<div class="a" style="left:335px;width:40px;text-align:center;font-size:9.8px;letter-spacing:-0.4px;line-height:12px;color:#1a1a1a;top:132px">40</div>
<div class="a" style="left:395px;top:148px;width:1px;height:7px;background:#555"></div>
<div class="a" style="left:375px;width:40px;text-align:center;font-size:9.8px;letter-spacing:-0.4px;line-height:12px;color:#1a1a1a;top:132px">50</div>
<div class="a" style="left:435px;top:148px;width:1px;height:7px;background:#555"></div>
<div class="a" style="left:415px;width:40px;text-align:center;font-size:9.8px;letter-spacing:-0.4px;line-height:12px;color:#1a1a1a;top:132px">60</div>
<div class="a" style="left:475px;top:148px;width:1px;height:7px;background:#555"></div>
<div class="a" style="left:455px;width:40px;text-align:center;font-size:9.8px;letter-spacing:-0.4px;line-height:12px;color:#1a1a1a;top:132px">70</div>
<div class="a" style="left:515px;top:148px;width:1px;height:7px;background:#555"></div>
<div class="a" style="left:495px;width:40px;text-align:center;font-size:9.8px;letter-spacing:-0.4px;line-height:12px;color:#1a1a1a;top:132px">80</div>
<div class="a" style="left:555px;top:148px;width:1px;height:7px;background:#555"></div>
<div class="a" style="left:535px;width:40px;text-align:center;font-size:9.8px;letter-spacing:-0.4px;line-height:12px;color:#1a1a1a;top:132px">90</div>
<div class="a" style="left:595px;top:148px;width:1px;height:7px;background:#555"></div>
<div class="a" style="left:575px;width:40px;text-align:center;font-size:9.8px;letter-spacing:-0.4px;line-height:12px;color:#1a1a1a;top:132px">100</div>
<div class="a" style="left:635px;top:148px;width:1px;height:7px;background:#555"></div>
<div class="a" style="left:615px;width:40px;text-align:center;font-size:9.8px;letter-spacing:-0.4px;line-height:12px;color:#1a1a1a;top:132px">110</div>
<div class="a" style="left:675px;top:148px;width:1px;height:7px;background:#555"></div>
<div class="a" style="left:655px;width:40px;text-align:center;font-size:9.8px;letter-spacing:-0.4px;line-height:12px;color:#1a1a1a;top:132px">120</div>
<div class="a" style="left:715px;top:148px;width:1px;height:7px;background:#555"></div>
<div class="a" style="left:695px;width:40px;text-align:center;font-size:9.8px;letter-spacing:-0.4px;line-height:12px;color:#1a1a1a;top:132px">130</div>
<div class="a" style="left:755px;top:148px;width:1px;height:7px;background:#555"></div>
<div class="a" style="left:735px;width:40px;text-align:center;font-size:9.8px;letter-spacing:-0.4px;line-height:12px;color:#1a1a1a;top:132px">140</div>
<div class="a" style="left:795px;top:148px;width:1px;height:7px;background:#555"></div>
<div class="a" style="left:775px;width:40px;text-align:center;font-size:9.8px;letter-spacing:-0.4px;line-height:12px;color:#1a1a1a;top:132px">150</div>
<div class="a" style="left:835px;top:148px;width:1px;height:7px;background:#555"></div>
<div class="a" style="left:815px;width:40px;text-align:center;font-size:9.8px;letter-spacing:-0.4px;line-height:12px;color:#1a1a1a;top:132px">160</div>
<div class="a" style="left:875px;top:148px;width:1px;height:7px;background:#555"></div>
<div class="a" style="left:855px;width:40px;text-align:center;font-size:9.8px;letter-spacing:-0.4px;line-height:12px;color:#1a1a1a;top:132px">170</div>
<div class="a" style="left:915px;top:148px;width:1px;height:7px;background:#555"></div>
<div class="a" style="left:895px;width:40px;text-align:center;font-size:9.8px;letter-spacing:-0.4px;line-height:12px;color:#1a1a1a;top:132px">180</div>
<div class="a" style="left:955px;top:148px;width:1px;height:7px;background:#555"></div>
<div class="a" style="left:935px;width:40px;text-align:center;font-size:9.8px;letter-spacing:-0.4px;line-height:12px;color:#1a1a1a;top:132px">190</div>
<div class="a" style="left:995px;top:148px;width:1px;height:7px;background:#555"></div>
<div class="a" style="left:975px;width:40px;text-align:center;font-size:9.8px;letter-spacing:-0.4px;line-height:12px;color:#1a1a1a;top:132px">200</div>
<div class="a" style="left:1035px;top:148px;width:1px;height:7px;background:#555"></div>
<div class="a" style="left:1015px;width:40px;text-align:center;font-size:9.8px;letter-spacing:-0.4px;line-height:12px;color:#1a1a1a;top:132px">210</div>
<div class="a" style="left:1075px;top:148px;width:1px;height:7px;background:#555"></div>
<div class="a" style="left:1055px;width:40px;text-align:center;font-size:9.8px;letter-spacing:-0.4px;line-height:12px;color:#1a1a1a;top:132px">220</div>
<div class="a" style="left:1115px;top:148px;width:1px;height:7px;background:#555"></div>
<div class="a" style="left:1095px;width:40px;text-align:center;font-size:9.8px;letter-spacing:-0.4px;line-height:12px;color:#1a1a1a;top:132px">230</div>
<div class="a" style="left:72px;top:155px;width:23px;height:577px;overflow:hidden">
<div class="a" style="left:16px;top:557px;width:7px;height:1px;background:#555"></div>
<div class="a" style="left:-14.1px;top:551px;width:40px;height:12px;text-align:center;font-size:9.8px;letter-spacing:-0.4px;line-height:12px;color:#1a1a1a;transform:rotate(-90deg)">-20</div>
<div class="a" style="left:16px;top:517px;width:7px;height:1px;background:#555"></div>
<div class="a" style="left:-14.1px;top:511px;width:40px;height:12px;text-align:center;font-size:9.8px;letter-spacing:-0.4px;line-height:12px;color:#1a1a1a;transform:rotate(-90deg)">-10</div>
<div class="a" style="left:16px;top:477px;width:7px;height:1px;background:#555"></div>
<div class="a" style="left:-14.1px;top:471px;width:40px;height:12px;text-align:center;font-size:9.8px;letter-spacing:-0.4px;line-height:12px;color:#1a1a1a;transform:rotate(-90deg)">0</div>
<div class="a" style="left:16px;top:437px;width:7px;height:1px;background:#555"></div>
<div class="a" style="left:-14.1px;top:431px;width:40px;height:12px;text-align:center;font-size:9.8px;letter-spacing:-0.4px;line-height:12px;color:#1a1a1a;transform:rotate(-90deg)">10</div>
<div class="a" style="left:16px;top:397px;width:7px;height:1px;background:#555"></div>
<div class="a" style="left:-14.1px;top:391px;width:40px;height:12px;text-align:center;font-size:9.8px;letter-spacing:-0.4px;line-height:12px;color:#1a1a1a;transform:rotate(-90deg)">20</div>
<div class="a" style="left:16px;top:357px;width:7px;height:1px;background:#555"></div>
<div class="a" style="left:-14.1px;top:351px;width:40px;height:12px;text-align:center;font-size:9.8px;letter-spacing:-0.4px;line-height:12px;color:#1a1a1a;transform:rotate(-90deg)">30</div>
<div class="a" style="left:16px;top:317px;width:7px;height:1px;background:#555"></div>
<div class="a" style="left:-14.1px;top:311px;width:40px;height:12px;text-align:center;font-size:9.8px;letter-spacing:-0.4px;line-height:12px;color:#1a1a1a;transform:rotate(-90deg)">40</div>
<div class="a" style="left:16px;top:277px;width:7px;height:1px;background:#555"></div>
<div class="a" style="left:-14.1px;top:271px;width:40px;height:12px;text-align:center;font-size:9.8px;letter-spacing:-0.4px;line-height:12px;color:#1a1a1a;transform:rotate(-90deg)">50</div>
<div class="a" style="left:16px;top:237px;width:7px;height:1px;background:#555"></div>
<div class="a" style="left:-14.1px;top:231px;width:40px;height:12px;text-align:center;font-size:9.8px;letter-spacing:-0.4px;line-height:12px;color:#1a1a1a;transform:rotate(-90deg)">60</div>
<div class="a" style="left:16px;top:197px;width:7px;height:1px;background:#555"></div>
<div class="a" style="left:-14.1px;top:191px;width:40px;height:12px;text-align:center;font-size:9.8px;letter-spacing:-0.4px;line-height:12px;color:#1a1a1a;transform:rotate(-90deg)">70</div>
<div class="a" style="left:16px;top:157px;width:7px;height:1px;background:#555"></div>
<div class="a" style="left:-14.1px;top:151px;width:40px;height:12px;text-align:center;font-size:9.8px;letter-spacing:-0.4px;line-height:12px;color:#1a1a1a;transform:rotate(-90deg)">80</div>
<div class="a" style="left:16px;top:117px;width:7px;height:1px;background:#555"></div>
<div class="a" style="left:-14.1px;top:111px;width:40px;height:12px;text-align:center;font-size:9.8px;letter-spacing:-0.4px;line-height:12px;color:#1a1a1a;transform:rotate(-90deg)">90</div>
<div class="a" style="left:16px;top:77px;width:7px;height:1px;background:#555"></div>
<div class="a" style="left:-14.1px;top:71px;width:40px;height:12px;text-align:center;font-size:9.8px;letter-spacing:-0.4px;line-height:12px;color:#1a1a1a;transform:rotate(-90deg)">100</div>
<div class="a" style="left:16px;top:37px;width:7px;height:1px;background:#555"></div>
<div class="a" style="left:-14.1px;top:31px;width:40px;height:12px;text-align:center;font-size:9.8px;letter-spacing:-0.4px;line-height:12px;color:#1a1a1a;transform:rotate(-90deg)">110</div>
<div class="a" style="left:16px;top:-3px;width:7px;height:1px;background:#555"></div>
<div class="a" style="left:-14.1px;top:-9px;width:40px;height:12px;text-align:center;font-size:9.8px;letter-spacing:-0.4px;line-height:12px;color:#1a1a1a;transform:rotate(-90deg)">120</div>
</div>
<div class="a" style="left:72px;top:155px;width:23px;height:0px;overflow:hidden"></div>
<svg class="a" style="left:389px;top:146px" width="13" height="8"><path d="M0.5 0.5H12.5L6.5 7z" fill="#000"/></svg>
<svg class="a" style="left:84px;top:665px" width="8" height="14"><path d="M0.5 0.5V13.5L7.5 7z" fill="#000"/></svg>
<div class="a" style="left:1138px;top:155px;width:16px;height:577px;background:#f8f8f8;border-left:1px solid #efefef"></div>
<div class="a" style="left:1154px;top:132px;width:1px;height:617px;background:#d4d4d4"></div>
<div class="a" style="left:1143px;top:295px;width:8px;height:283.5px;border-radius:4px;background:#7f7f7f"></div>
<div class="a" style="left:95px;top:732px;width:1059px;height:18px;background:#f8f8f8;border-bottom:1.5px solid #bcbcbc"></div>
<div class="a" style="left:285px;top:737px;width:639px;height:8px;border-radius:4px;background:#7f7f7f"></div>
<div class="a" style="left:1083px;top:732px;width:71px;height:16px;background:#ececec;font-size:13px;line-height:17px;text-align:right;color:#1a1a1a;padding-right:0px">10 &lt; 100</div>
<div class="a" style="left:72px;top:748.5px;width:1082px;height:1.5px;background:#bcbcbc"></div>
<div class="a" style="left:72px;top:750px;width:1082px;height:21px;background:#fff;border-bottom:1px solid #c8c8c8"></div>
<div class="a" style="left:77px;top:751px;font-size:13px;line-height:16px;color:#1515d0;font-style:italic">Comando: <span style="font-style:normal">move</span></div>
<div class="a" style="left:72px;top:771px;width:1082px;height:27px;background:#ececec"></div>
<div class="a" style="left:73px;top:778px;font-size:13px;line-height:16px;color:#111">Comando:</div>
<div class="a" style="left:138px;top:776px;width:989px;height:18px;background:#fff"></div>
<div class="a" style="left:1127px;top:772px;width:26px;height:26px;border:1px solid #b8b8b8;background:linear-gradient(#f6f6f6,#e8e8e8)"></div>
<svg class="a" style="left:1130px;top:777px" width="20" height="16"><rect x="3.5" y="3" width="13.5" height="9.5" fill="#f2f2f2" stroke="#222" stroke-width="0.9"/><rect x="3" y="2.6" width="14.5" height="2.2" fill="#111"/></svg>
<svg width="1500" height="844" style="position:absolute;left:0;top:0">
<style>.oc{fill:none;stroke:#e4e4e4;stroke-width:1.05}.ic{fill:none;stroke:#8e8e8e;stroke-width:0.9}.ho{fill:none;stroke:#f0f0f0;stroke-width:1.4}.cl{fill:none;stroke:#6e0000;stroke-width:1.6}</style>
<defs><clipPath id="cv"><rect x="95" y="155" width="1043" height="577"/></clipPath></defs>
<g clip-path="url(#cv)">
<rect x="95" y="155" width="1043" height="577" fill="#000"/>
<rect x="194" y="155" width="2" height="577" fill="#111"/>
<rect x="594" y="155" width="2" height="577" fill="#111"/>
<rect x="994" y="155" width="2" height="577" fill="#111"/>
<rect x="95" y="631" width="1043" height="2" fill="#111"/>
<rect x="95" y="231" width="1043" height="2" fill="#111"/>
<path d="M115 712h1v1h-1zM115 672h1v1h-1zM115 632h1v1h-1zM115 592h1v1h-1zM115 552h1v1h-1zM115 512h1v1h-1zM115 472h1v1h-1zM115 432h1v1h-1zM115 392h1v1h-1zM115 352h1v1h-1zM115 312h1v1h-1zM115 272h1v1h-1zM115 232h1v1h-1zM115 192h1v1h-1zM155 712h1v1h-1zM155 672h1v1h-1zM155 632h1v1h-1zM155 592h1v1h-1zM155 552h1v1h-1zM155 512h1v1h-1zM155 472h1v1h-1zM155 432h1v1h-1zM155 392h1v1h-1zM155 352h1v1h-1zM155 312h1v1h-1zM155 272h1v1h-1zM155 232h1v1h-1zM155 192h1v1h-1zM195 712h1v1h-1zM195 672h1v1h-1zM195 632h1v1h-1zM195 592h1v1h-1zM195 552h1v1h-1zM195 512h1v1h-1zM195 472h1v1h-1zM195 432h1v1h-1zM195 392h1v1h-1zM195 352h1v1h-1zM195 312h1v1h-1zM195 272h1v1h-1zM195 232h1v1h-1zM195 192h1v1h-1zM235 712h1v1h-1zM235 672h1v1h-1zM235 632h1v1h-1zM235 592h1v1h-1zM235 552h1v1h-1zM235 512h1v1h-1zM235 472h1v1h-1zM235 432h1v1h-1zM235 392h1v1h-1zM235 352h1v1h-1zM235 312h1v1h-1zM235 272h1v1h-1zM235 232h1v1h-1zM235 192h1v1h-1zM275 712h1v1h-1zM275 672h1v1h-1zM275 632h1v1h-1zM275 592h1v1h-1zM275 552h1v1h-1zM275 512h1v1h-1zM275 472h1v1h-1zM275 432h1v1h-1zM275 392h1v1h-1zM275 352h1v1h-1zM275 312h1v1h-1zM275 272h1v1h-1zM275 232h1v1h-1zM275 192h1v1h-1zM315 712h1v1h-1zM315 672h1v1h-1zM315 632h1v1h-1zM315 592h1v1h-1zM315 552h1v1h-1zM315 512h1v1h-1zM315 472h1v1h-1zM315 432h1v1h-1zM315 392h1v1h-1zM315 352h1v1h-1zM315 312h1v1h-1zM315 272h1v1h-1zM315 232h1v1h-1zM315 192h1v1h-1zM355 712h1v1h-1zM355 672h1v1h-1zM355 632h1v1h-1zM355 592h1v1h-1zM355 552h1v1h-1zM355 512h1v1h-1zM355 472h1v1h-1zM355 432h1v1h-1zM355 392h1v1h-1zM355 352h1v1h-1zM355 312h1v1h-1zM355 272h1v1h-1zM355 232h1v1h-1zM355 192h1v1h-1zM395 712h1v1h-1zM395 672h1v1h-1zM395 632h1v1h-1zM395 592h1v1h-1zM395 552h1v1h-1zM395 512h1v1h-1zM395 472h1v1h-1zM395 432h1v1h-1zM395 392h1v1h-1zM395 352h1v1h-1zM395 312h1v1h-1zM395 272h1v1h-1zM395 232h1v1h-1zM395 192h1v1h-1zM435 712h1v1h-1zM435 672h1v1h-1zM435 632h1v1h-1zM435 592h1v1h-1zM435 552h1v1h-1zM435 512h1v1h-1zM435 472h1v1h-1zM435 432h1v1h-1zM435 392h1v1h-1zM435 352h1v1h-1zM435 312h1v1h-1zM435 272h1v1h-1zM435 232h1v1h-1zM435 192h1v1h-1zM475 712h1v1h-1zM475 672h1v1h-1zM475 632h1v1h-1zM475 592h1v1h-1zM475 552h1v1h-1zM475 512h1v1h-1zM475 472h1v1h-1zM475 432h1v1h-1zM475 392h1v1h-1zM475 352h1v1h-1zM475 312h1v1h-1zM475 272h1v1h-1zM475 232h1v1h-1zM475 192h1v1h-1zM515 712h1v1h-1zM515 672h1v1h-1zM515 632h1v1h-1zM515 592h1v1h-1zM515 552h1v1h-1zM515 512h1v1h-1zM515 472h1v1h-1zM515 432h1v1h-1zM515 392h1v1h-1zM515 352h1v1h-1zM515 312h1v1h-1zM515 272h1v1h-1zM515 232h1v1h-1zM515 192h1v1h-1zM555 712h1v1h-1zM555 672h1v1h-1zM555 632h1v1h-1zM555 592h1v1h-1zM555 552h1v1h-1zM555 512h1v1h-1zM555 472h1v1h-1zM555 432h1v1h-1zM555 392h1v1h-1zM555 352h1v1h-1zM555 312h1v1h-1zM555 272h1v1h-1zM555 232h1v1h-1zM555 192h1v1h-1zM595 712h1v1h-1zM595 672h1v1h-1zM595 632h1v1h-1zM595 592h1v1h-1zM595 552h1v1h-1zM595 512h1v1h-1zM595 472h1v1h-1zM595 432h1v1h-1zM595 392h1v1h-1zM595 352h1v1h-1zM595 312h1v1h-1zM595 272h1v1h-1zM595 232h1v1h-1zM595 192h1v1h-1zM635 712h1v1h-1zM635 672h1v1h-1zM635 632h1v1h-1zM635 592h1v1h-1zM635 552h1v1h-1zM635 512h1v1h-1zM635 472h1v1h-1zM635 432h1v1h-1zM635 392h1v1h-1zM635 352h1v1h-1zM635 312h1v1h-1zM635 272h1v1h-1zM635 232h1v1h-1zM635 192h1v1h-1zM675 712h1v1h-1zM675 672h1v1h-1zM675 632h1v1h-1zM675 592h1v1h-1zM675 552h1v1h-1zM675 512h1v1h-1zM675 472h1v1h-1zM675 432h1v1h-1zM675 392h1v1h-1zM675 352h1v1h-1zM675 312h1v1h-1zM675 272h1v1h-1zM675 232h1v1h-1zM675 192h1v1h-1zM715 712h1v1h-1zM715 672h1v1h-1zM715 632h1v1h-1zM715 592h1v1h-1zM715 552h1v1h-1zM715 512h1v1h-1zM715 472h1v1h-1zM715 432h1v1h-1zM715 392h1v1h-1zM715 352h1v1h-1zM715 312h1v1h-1zM715 272h1v1h-1zM715 232h1v1h-1zM715 192h1v1h-1zM755 712h1v1h-1zM755 672h1v1h-1zM755 632h1v1h-1zM755 592h1v1h-1zM755 552h1v1h-1zM755 512h1v1h-1zM755 472h1v1h-1zM755 432h1v1h-1zM755 392h1v1h-1zM755 352h1v1h-1zM755 312h1v1h-1zM755 272h1v1h-1zM755 232h1v1h-1zM755 192h1v1h-1zM795 712h1v1h-1zM795 672h1v1h-1zM795 632h1v1h-1zM795 592h1v1h-1zM795 552h1v1h-1zM795 512h1v1h-1zM795 472h1v1h-1zM795 432h1v1h-1zM795 392h1v1h-1zM795 352h1v1h-1zM795 312h1v1h-1zM795 272h1v1h-1zM795 232h1v1h-1zM795 192h1v1h-1zM835 712h1v1h-1zM835 672h1v1h-1zM835 632h1v1h-1zM835 592h1v1h-1zM835 552h1v1h-1zM835 512h1v1h-1zM835 472h1v1h-1zM835 432h1v1h-1zM835 392h1v1h-1zM835 352h1v1h-1zM835 312h1v1h-1zM835 272h1v1h-1zM835 232h1v1h-1zM835 192h1v1h-1zM875 712h1v1h-1zM875 672h1v1h-1zM875 632h1v1h-1zM875 592h1v1h-1zM875 552h1v1h-1zM875 512h1v1h-1zM875 472h1v1h-1zM875 432h1v1h-1zM875 392h1v1h-1zM875 352h1v1h-1zM875 312h1v1h-1zM875 272h1v1h-1zM875 232h1v1h-1zM875 192h1v1h-1zM915 712h1v1h-1zM915 672h1v1h-1zM915 632h1v1h-1zM915 592h1v1h-1zM915 552h1v1h-1zM915 512h1v1h-1zM915 472h1v1h-1zM915 432h1v1h-1zM915 392h1v1h-1zM915 352h1v1h-1zM915 312h1v1h-1zM915 272h1v1h-1zM915 232h1v1h-1zM915 192h1v1h-1zM955 712h1v1h-1zM955 672h1v1h-1zM955 632h1v1h-1zM955 592h1v1h-1zM955 552h1v1h-1zM955 512h1v1h-1zM955 472h1v1h-1zM955 432h1v1h-1zM955 392h1v1h-1zM955 352h1v1h-1zM955 312h1v1h-1zM955 272h1v1h-1zM955 232h1v1h-1zM955 192h1v1h-1zM995 712h1v1h-1zM995 672h1v1h-1zM995 632h1v1h-1zM995 592h1v1h-1zM995 552h1v1h-1zM995 512h1v1h-1zM995 472h1v1h-1zM995 432h1v1h-1zM995 392h1v1h-1zM995 352h1v1h-1zM995 312h1v1h-1zM995 272h1v1h-1zM995 232h1v1h-1zM995 192h1v1h-1zM1035 712h1v1h-1zM1035 672h1v1h-1zM1035 632h1v1h-1zM1035 592h1v1h-1zM1035 552h1v1h-1zM1035 512h1v1h-1zM1035 472h1v1h-1zM1035 432h1v1h-1zM1035 392h1v1h-1zM1035 352h1v1h-1zM1035 312h1v1h-1zM1035 272h1v1h-1zM1035 232h1v1h-1zM1035 192h1v1h-1zM1075 712h1v1h-1zM1075 672h1v1h-1zM1075 632h1v1h-1zM1075 592h1v1h-1zM1075 552h1v1h-1zM1075 512h1v1h-1zM1075 472h1v1h-1zM1075 432h1v1h-1zM1075 392h1v1h-1zM1075 352h1v1h-1zM1075 312h1v1h-1zM1075 272h1v1h-1zM1075 232h1v1h-1zM1075 192h1v1h-1zM1115 712h1v1h-1zM1115 672h1v1h-1zM1115 632h1v1h-1zM1115 592h1v1h-1zM1115 552h1v1h-1zM1115 512h1v1h-1zM1115 472h1v1h-1zM1115 432h1v1h-1zM1115 392h1v1h-1zM1115 352h1v1h-1zM1115 312h1v1h-1zM1115 272h1v1h-1zM1115 232h1v1h-1zM1115 192h1v1h-1z" fill="#484848"/>
<path d="M195 616 L195 536 A16 16 0 0 1 211 520 L267.58 520 A12 12 0 0 1 273.91 521.8 L379.44 587.31 A16 16 0 0 1 387 600.9 L387 616 A16 16 0 0 1 371 632 L211 632 A16 16 0 0 1 195 616Z" class="oc"/>
<path d="M199.5 616 L199.5 536 A11.5 11.5 0 0 1 211 524.5 L267.44 524.5 A8 8 0 0 1 271.65 525.7 L377.06 591.13 A11.5 11.5 0 0 1 382.5 600.9 L382.5 616 A11.5 11.5 0 0 1 371 627.5 L211 627.5 A11.5 11.5 0 0 1 199.5 616Z" class="ic"/>
<path d="M211 616H231M211 616H191M211 616V636M211 616V596" class="cl" stroke-dasharray="2.7 1.5 0.6 1.5" stroke-dashoffset="1.35"/>
<circle cx="211" cy="616" r="1.25" fill="#a00000"/>
<circle cx="211" cy="616" r="4" class="ho"/>
<path d="M211 536H231M211 536H191M211 536V556M211 536V516" class="cl" stroke-dasharray="2.7 1.5 0.6 1.5" stroke-dashoffset="1.35"/>
<circle cx="211" cy="536" r="1.25" fill="#a00000"/>
<circle cx="211" cy="536" r="4" class="ho"/>
<path d="M371 616H391M371 616H351M371 616V636M371 616V596" class="cl" stroke-dasharray="2.7 1.5 0.6 1.5" stroke-dashoffset="1.35"/>
<circle cx="371" cy="616" r="1.25" fill="#a00000"/>
<circle cx="371" cy="616" r="4" class="ho"/>
<path d="M259 556H280M259 556H238M259 556V577M259 556V535" class="cl" stroke-dasharray="3.6 1.9 0.6 1.9" stroke-dashoffset="1.8"/>
<circle cx="259" cy="556" r="1.25" fill="#a00000"/>
<circle cx="259" cy="556" r="12.48" class="ho"/>
<path d="M323 596H344M323 596H302M323 596V617M323 596V575" class="cl" stroke-dasharray="3.6 1.9 0.6 1.9" stroke-dashoffset="1.8"/>
<circle cx="323" cy="596" r="1.25" fill="#a00000"/>
<circle cx="323" cy="596" r="12.48" class="ho"/>
<path d="M195 496 L195 416 A16 16 0 0 1 211 400 L267.58 400 A12 12 0 0 1 273.91 401.8 L379.44 467.31 A16 16 0 0 1 387 480.9 L387 496 A16 16 0 0 1 371 512 L211 512 A16 16 0 0 1 195 496Z" class="oc"/>
<path d="M199.5 496 L199.5 416 A11.5 11.5 0 0 1 211 404.5 L267.44 404.5 A8 8 0 0 1 271.65 405.7 L377.06 471.13 A11.5 11.5 0 0 1 382.5 480.9 L382.5 496 A11.5 11.5 0 0 1 371 507.5 L211 507.5 A11.5 11.5 0 0 1 199.5 496Z" class="ic"/>
<path d="M211 496H231M211 496H191M211 496V516M211 496V476" class="cl" stroke-dasharray="2.7 1.5 0.6 1.5" stroke-dashoffset="1.35"/>
<circle cx="211" cy="496" r="1.25" fill="#a00000"/>
<circle cx="211" cy="496" r="4" class="ho"/>
<path d="M211 416H231M211 416H191M211 416V436M211 416V396" class="cl" stroke-dasharray="2.7 1.5 0.6 1.5" stroke-dashoffset="1.35"/>
<circle cx="211" cy="416" r="1.25" fill="#a00000"/>
<circle cx="211" cy="416" r="4" class="ho"/>
<path d="M371 496H391M371 496H351M371 496V516M371 496V476" class="cl" stroke-dasharray="2.7 1.5 0.6 1.5" stroke-dashoffset="1.35"/>
<circle cx="371" cy="496" r="1.25" fill="#a00000"/>
<circle cx="371" cy="496" r="4" class="ho"/>
<path d="M259 436H280M259 436H238M259 436V457M259 436V415" class="cl" stroke-dasharray="3.6 1.9 0.6 1.9" stroke-dashoffset="1.8"/>
<circle cx="259" cy="436" r="1.25" fill="#a00000"/>
<circle cx="259" cy="436" r="12.48" class="ho"/>
<path d="M323 476H344M323 476H302M323 476V497M323 476V455" class="cl" stroke-dasharray="3.6 1.9 0.6 1.9" stroke-dashoffset="1.8"/>
<circle cx="323" cy="476" r="1.25" fill="#a00000"/>
<circle cx="323" cy="476" r="12.48" class="ho"/>
<path d="M195 376 L195 296 A16 16 0 0 1 211 280 L267.58 280 A12 12 0 0 1 273.91 281.8 L379.44 347.31 A16 16 0 0 1 387 360.9 L387 376 A16 16 0 0 1 371 392 L211 392 A16 16 0 0 1 195 376Z" class="oc"/>
<path d="M199.5 376 L199.5 296 A11.5 11.5 0 0 1 211 284.5 L267.44 284.5 A8 8 0 0 1 271.65 285.7 L377.06 351.13 A11.5 11.5 0 0 1 382.5 360.9 L382.5 376 A11.5 11.5 0 0 1 371 387.5 L211 387.5 A11.5 11.5 0 0 1 199.5 376Z" class="ic"/>
<path d="M211 376H231M211 376H191M211 376V396M211 376V356" class="cl" stroke-dasharray="2.7 1.5 0.6 1.5" stroke-dashoffset="1.35"/>
<circle cx="211" cy="376" r="1.25" fill="#a00000"/>
<circle cx="211" cy="376" r="4" class="ho"/>
<path d="M211 296H231M211 296H191M211 296V316M211 296V276" class="cl" stroke-dasharray="2.7 1.5 0.6 1.5" stroke-dashoffset="1.35"/>
<circle cx="211" cy="296" r="1.25" fill="#a00000"/>
<circle cx="211" cy="296" r="4" class="ho"/>
<path d="M371 376H391M371 376H351M371 376V396M371 376V356" class="cl" stroke-dasharray="2.7 1.5 0.6 1.5" stroke-dashoffset="1.35"/>
<circle cx="371" cy="376" r="1.25" fill="#a00000"/>
<circle cx="371" cy="376" r="4" class="ho"/>
<path d="M259 316H280M259 316H238M259 316V337M259 316V295" class="cl" stroke-dasharray="3.6 1.9 0.6 1.9" stroke-dashoffset="1.8"/>
<circle cx="259" cy="316" r="1.25" fill="#a00000"/>
<circle cx="259" cy="316" r="12.48" class="ho"/>
<path d="M323 356H344M323 356H302M323 356V377M323 356V335" class="cl" stroke-dasharray="3.6 1.9 0.6 1.9" stroke-dashoffset="1.8"/>
<circle cx="323" cy="356" r="1.25" fill="#a00000"/>
<circle cx="323" cy="356" r="12.48" class="ho"/>
<path d="M395 616 L395 536 A16 16 0 0 1 411 520 L467.58 520 A12 12 0 0 1 473.91 521.8 L579.44 587.31 A16 16 0 0 1 587 600.9 L587 616 A16 16 0 0 1 571 632 L411 632 A16 16 0 0 1 395 616Z" class="oc"/>
<path d="M399.5 616 L399.5 536 A11.5 11.5 0 0 1 411 524.5 L467.44 524.5 A8 8 0 0 1 471.65 525.7 L577.06 591.13 A11.5 11.5 0 0 1 582.5 600.9 L582.5 616 A11.5 11.5 0 0 1 571 627.5 L411 627.5 A11.5 11.5 0 0 1 399.5 616Z" class="ic"/>
<path d="M411 616H431M411 616H391M411 616V636M411 616V596" class="cl" stroke-dasharray="2.7 1.5 0.6 1.5" stroke-dashoffset="1.35"/>
<circle cx="411" cy="616" r="1.25" fill="#a00000"/>
<circle cx="411" cy="616" r="4" class="ho"/>
<path d="M411 536H431M411 536H391M411 536V556M411 536V516" class="cl" stroke-dasharray="2.7 1.5 0.6 1.5" stroke-dashoffset="1.35"/>
<circle cx="411" cy="536" r="1.25" fill="#a00000"/>
<circle cx="411" cy="536" r="4" class="ho"/>
<path d="M571 616H591M571 616H551M571 616V636M571 616V596" class="cl" stroke-dasharray="2.7 1.5 0.6 1.5" stroke-dashoffset="1.35"/>
<circle cx="571" cy="616" r="1.25" fill="#a00000"/>
<circle cx="571" cy="616" r="4" class="ho"/>
<path d="M459 556H480M459 556H438M459 556V577M459 556V535" class="cl" stroke-dasharray="3.6 1.9 0.6 1.9" stroke-dashoffset="1.8"/>
<circle cx="459" cy="556" r="1.25" fill="#a00000"/>
<circle cx="459" cy="556" r="12.48" class="ho"/>
<path d="M523 596H544M523 596H502M523 596V617M523 596V575" class="cl" stroke-dasharray="3.6 1.9 0.6 1.9" stroke-dashoffset="1.8"/>
<circle cx="523" cy="596" r="1.25" fill="#a00000"/>
<circle cx="523" cy="596" r="12.48" class="ho"/>
<path d="M395 496 L395 416 A16 16 0 0 1 411 400 L467.58 400 A12 12 0 0 1 473.91 401.8 L579.44 467.31 A16 16 0 0 1 587 480.9 L587 496 A16 16 0 0 1 571 512 L411 512 A16 16 0 0 1 395 496Z" class="oc"/>
<path d="M399.5 496 L399.5 416 A11.5 11.5 0 0 1 411 404.5 L467.44 404.5 A8 8 0 0 1 471.65 405.7 L577.06 471.13 A11.5 11.5 0 0 1 582.5 480.9 L582.5 496 A11.5 11.5 0 0 1 571 507.5 L411 507.5 A11.5 11.5 0 0 1 399.5 496Z" class="ic"/>
<path d="M411 496H431M411 496H391M411 496V516M411 496V476" class="cl" stroke-dasharray="2.7 1.5 0.6 1.5" stroke-dashoffset="1.35"/>
<circle cx="411" cy="496" r="1.25" fill="#a00000"/>
<circle cx="411" cy="496" r="4" class="ho"/>
<path d="M411 416H431M411 416H391M411 416V436M411 416V396" class="cl" stroke-dasharray="2.7 1.5 0.6 1.5" stroke-dashoffset="1.35"/>
<circle cx="411" cy="416" r="1.25" fill="#a00000"/>
<circle cx="411" cy="416" r="4" class="ho"/>
<path d="M571 496H591M571 496H551M571 496V516M571 496V476" class="cl" stroke-dasharray="2.7 1.5 0.6 1.5" stroke-dashoffset="1.35"/>
<circle cx="571" cy="496" r="1.25" fill="#a00000"/>
<circle cx="571" cy="496" r="4" class="ho"/>
<path d="M459 436H480M459 436H438M459 436V457M459 436V415" class="cl" stroke-dasharray="3.6 1.9 0.6 1.9" stroke-dashoffset="1.8"/>
<circle cx="459" cy="436" r="1.25" fill="#a00000"/>
<circle cx="459" cy="436" r="12.48" class="ho"/>
<path d="M523 476H544M523 476H502M523 476V497M523 476V455" class="cl" stroke-dasharray="3.6 1.9 0.6 1.9" stroke-dashoffset="1.8"/>
<circle cx="523" cy="476" r="1.25" fill="#a00000"/>
<circle cx="523" cy="476" r="12.48" class="ho"/>
<path d="M395 376 L395 296 A16 16 0 0 1 411 280 L467.58 280 A12 12 0 0 1 473.91 281.8 L579.44 347.31 A16 16 0 0 1 587 360.9 L587 376 A16 16 0 0 1 571 392 L411 392 A16 16 0 0 1 395 376Z" class="oc"/>
<path d="M399.5 376 L399.5 296 A11.5 11.5 0 0 1 411 284.5 L467.44 284.5 A8 8 0 0 1 471.65 285.7 L577.06 351.13 A11.5 11.5 0 0 1 582.5 360.9 L582.5 376 A11.5 11.5 0 0 1 571 387.5 L411 387.5 A11.5 11.5 0 0 1 399.5 376Z" class="ic"/>
<path d="M411 376H431M411 376H391M411 376V396M411 376V356" class="cl" stroke-dasharray="2.7 1.5 0.6 1.5" stroke-dashoffset="1.35"/>
<circle cx="411" cy="376" r="1.25" fill="#a00000"/>
<circle cx="411" cy="376" r="4" class="ho"/>
<path d="M411 296H431M411 296H391M411 296V316M411 296V276" class="cl" stroke-dasharray="2.7 1.5 0.6 1.5" stroke-dashoffset="1.35"/>
<circle cx="411" cy="296" r="1.25" fill="#a00000"/>
<circle cx="411" cy="296" r="4" class="ho"/>
<path d="M571 376H591M571 376H551M571 376V396M571 376V356" class="cl" stroke-dasharray="2.7 1.5 0.6 1.5" stroke-dashoffset="1.35"/>
<circle cx="571" cy="376" r="1.25" fill="#a00000"/>
<circle cx="571" cy="376" r="4" class="ho"/>
<path d="M459 316H480M459 316H438M459 316V337M459 316V295" class="cl" stroke-dasharray="3.6 1.9 0.6 1.9" stroke-dashoffset="1.8"/>
<circle cx="459" cy="316" r="1.25" fill="#a00000"/>
<circle cx="459" cy="316" r="12.48" class="ho"/>
<path d="M523 356H544M523 356H502M523 356V377M523 356V335" class="cl" stroke-dasharray="3.6 1.9 0.6 1.9" stroke-dashoffset="1.8"/>
<circle cx="523" cy="356" r="1.25" fill="#a00000"/>
<circle cx="523" cy="356" r="12.48" class="ho"/>
<path d="M595 616 L595 536 A16 16 0 0 1 611 520 L667.58 520 A12 12 0 0 1 673.91 521.8 L779.44 587.31 A16 16 0 0 1 787 600.9 L787 616 A16 16 0 0 1 771 632 L611 632 A16 16 0 0 1 595 616Z" class="oc"/>
<path d="M599.5 616 L599.5 536 A11.5 11.5 0 0 1 611 524.5 L667.44 524.5 A8 8 0 0 1 671.65 525.7 L777.06 591.13 A11.5 11.5 0 0 1 782.5 600.9 L782.5 616 A11.5 11.5 0 0 1 771 627.5 L611 627.5 A11.5 11.5 0 0 1 599.5 616Z" class="ic"/>
<path d="M611 616H631M611 616H591M611 616V636M611 616V596" class="cl" stroke-dasharray="2.7 1.5 0.6 1.5" stroke-dashoffset="1.35"/>
<circle cx="611" cy="616" r="1.25" fill="#a00000"/>
<circle cx="611" cy="616" r="4" class="ho"/>
<path d="M611 536H631M611 536H591M611 536V556M611 536V516" class="cl" stroke-dasharray="2.7 1.5 0.6 1.5" stroke-dashoffset="1.35"/>
<circle cx="611" cy="536" r="1.25" fill="#a00000"/>
<circle cx="611" cy="536" r="4" class="ho"/>
<path d="M771 616H791M771 616H751M771 616V636M771 616V596" class="cl" stroke-dasharray="2.7 1.5 0.6 1.5" stroke-dashoffset="1.35"/>
<circle cx="771" cy="616" r="1.25" fill="#a00000"/>
<circle cx="771" cy="616" r="4" class="ho"/>
<path d="M659 556H680M659 556H638M659 556V577M659 556V535" class="cl" stroke-dasharray="3.6 1.9 0.6 1.9" stroke-dashoffset="1.8"/>
<circle cx="659" cy="556" r="1.25" fill="#a00000"/>
<circle cx="659" cy="556" r="12.48" class="ho"/>
<path d="M723 596H744M723 596H702M723 596V617M723 596V575" class="cl" stroke-dasharray="3.6 1.9 0.6 1.9" stroke-dashoffset="1.8"/>
<circle cx="723" cy="596" r="1.25" fill="#a00000"/>
<circle cx="723" cy="596" r="12.48" class="ho"/>
<path d="M595 496 L595 416 A16 16 0 0 1 611 400 L667.58 400 A12 12 0 0 1 673.91 401.8 L779.44 467.31 A16 16 0 0 1 787 480.9 L787 496 A16 16 0 0 1 771 512 L611 512 A16 16 0 0 1 595 496Z" class="oc"/>
<path d="M599.5 496 L599.5 416 A11.5 11.5 0 0 1 611 404.5 L667.44 404.5 A8 8 0 0 1 671.65 405.7 L777.06 471.13 A11.5 11.5 0 0 1 782.5 480.9 L782.5 496 A11.5 11.5 0 0 1 771 507.5 L611 507.5 A11.5 11.5 0 0 1 599.5 496Z" class="ic"/>
<path d="M611 496H631M611 496H591M611 496V516M611 496V476" class="cl" stroke-dasharray="2.7 1.5 0.6 1.5" stroke-dashoffset="1.35"/>
<circle cx="611" cy="496" r="1.25" fill="#a00000"/>
<circle cx="611" cy="496" r="4" class="ho"/>
<path d="M611 416H631M611 416H591M611 416V436M611 416V396" class="cl" stroke-dasharray="2.7 1.5 0.6 1.5" stroke-dashoffset="1.35"/>
<circle cx="611" cy="416" r="1.25" fill="#a00000"/>
<circle cx="611" cy="416" r="4" class="ho"/>
<path d="M771 496H791M771 496H751M771 496V516M771 496V476" class="cl" stroke-dasharray="2.7 1.5 0.6 1.5" stroke-dashoffset="1.35"/>
<circle cx="771" cy="496" r="1.25" fill="#a00000"/>
<circle cx="771" cy="496" r="4" class="ho"/>
<path d="M659 436H680M659 436H638M659 436V457M659 436V415" class="cl" stroke-dasharray="3.6 1.9 0.6 1.9" stroke-dashoffset="1.8"/>
<circle cx="659" cy="436" r="1.25" fill="#a00000"/>
<circle cx="659" cy="436" r="12.48" class="ho"/>
<path d="M723 476H744M723 476H702M723 476V497M723 476V455" class="cl" stroke-dasharray="3.6 1.9 0.6 1.9" stroke-dashoffset="1.8"/>
<circle cx="723" cy="476" r="1.25" fill="#a00000"/>
<circle cx="723" cy="476" r="12.48" class="ho"/>
<path d="M595 376 L595 296 A16 16 0 0 1 611 280 L667.58 280 A12 12 0 0 1 673.91 281.8 L779.44 347.31 A16 16 0 0 1 787 360.9 L787 376 A16 16 0 0 1 771 392 L611 392 A16 16 0 0 1 595 376Z" class="oc"/>
<path d="M599.5 376 L599.5 296 A11.5 11.5 0 0 1 611 284.5 L667.44 284.5 A8 8 0 0 1 671.65 285.7 L777.06 351.13 A11.5 11.5 0 0 1 782.5 360.9 L782.5 376 A11.5 11.5 0 0 1 771 387.5 L611 387.5 A11.5 11.5 0 0 1 599.5 376Z" class="ic"/>
<path d="M611 376H631M611 376H591M611 376V396M611 376V356" class="cl" stroke-dasharray="2.7 1.5 0.6 1.5" stroke-dashoffset="1.35"/>
<circle cx="611" cy="376" r="1.25" fill="#a00000"/>
<circle cx="611" cy="376" r="4" class="ho"/>
<path d="M611 296H631M611 296H591M611 296V316M611 296V276" class="cl" stroke-dasharray="2.7 1.5 0.6 1.5" stroke-dashoffset="1.35"/>
<circle cx="611" cy="296" r="1.25" fill="#a00000"/>
<circle cx="611" cy="296" r="4" class="ho"/>
<path d="M771 376H791M771 376H751M771 376V396M771 376V356" class="cl" stroke-dasharray="2.7 1.5 0.6 1.5" stroke-dashoffset="1.35"/>
<circle cx="771" cy="376" r="1.25" fill="#a00000"/>
<circle cx="771" cy="376" r="4" class="ho"/>
<path d="M659 316H680M659 316H638M659 316V337M659 316V295" class="cl" stroke-dasharray="3.6 1.9 0.6 1.9" stroke-dashoffset="1.8"/>
<circle cx="659" cy="316" r="1.25" fill="#a00000"/>
<circle cx="659" cy="316" r="12.48" class="ho"/>
<path d="M723 356H744M723 356H702M723 356V377M723 356V335" class="cl" stroke-dasharray="3.6 1.9 0.6 1.9" stroke-dashoffset="1.8"/>
<circle cx="723" cy="356" r="1.25" fill="#a00000"/>
<circle cx="723" cy="356" r="12.48" class="ho"/>
<path d="M795 616 L795 536 A16 16 0 0 1 811 520 L867.58 520 A12 12 0 0 1 873.91 521.8 L979.44 587.31 A16 16 0 0 1 987 600.9 L987 616 A16 16 0 0 1 971 632 L811 632 A16 16 0 0 1 795 616Z" class="oc"/>
<path d="M799.5 616 L799.5 536 A11.5 11.5 0 0 1 811 524.5 L867.44 524.5 A8 8 0 0 1 871.65 525.7 L977.06 591.13 A11.5 11.5 0 0 1 982.5 600.9 L982.5 616 A11.5 11.5 0 0 1 971 627.5 L811 627.5 A11.5 11.5 0 0 1 799.5 616Z" class="ic"/>
<path d="M811 616H831M811 616H791M811 616V636M811 616V596" class="cl" stroke-dasharray="2.7 1.5 0.6 1.5" stroke-dashoffset="1.35"/>
<circle cx="811" cy="616" r="1.25" fill="#a00000"/>
<circle cx="811" cy="616" r="4" class="ho"/>
<path d="M811 536H831M811 536H791M811 536V556M811 536V516" class="cl" stroke-dasharray="2.7 1.5 0.6 1.5" stroke-dashoffset="1.35"/>
<circle cx="811" cy="536" r="1.25" fill="#a00000"/>
<circle cx="811" cy="536" r="4" class="ho"/>
<path d="M971 616H991M971 616H951M971 616V636M971 616V596" class="cl" stroke-dasharray="2.7 1.5 0.6 1.5" stroke-dashoffset="1.35"/>
<circle cx="971" cy="616" r="1.25" fill="#a00000"/>
<circle cx="971" cy="616" r="4" class="ho"/>
<path d="M859 556H880M859 556H838M859 556V577M859 556V535" class="cl" stroke-dasharray="3.6 1.9 0.6 1.9" stroke-dashoffset="1.8"/>
<circle cx="859" cy="556" r="1.25" fill="#a00000"/>
<circle cx="859" cy="556" r="12.48" class="ho"/>
<path d="M923 596H944M923 596H902M923 596V617M923 596V575" class="cl" stroke-dasharray="3.6 1.9 0.6 1.9" stroke-dashoffset="1.8"/>
<circle cx="923" cy="596" r="1.25" fill="#a00000"/>
<circle cx="923" cy="596" r="12.48" class="ho"/>
<path d="M795 496 L795 416 A16 16 0 0 1 811 400 L867.58 400 A12 12 0 0 1 873.91 401.8 L979.44 467.31 A16 16 0 0 1 987 480.9 L987 496 A16 16 0 0 1 971 512 L811 512 A16 16 0 0 1 795 496Z" class="oc"/>
<path d="M799.5 496 L799.5 416 A11.5 11.5 0 0 1 811 404.5 L867.44 404.5 A8 8 0 0 1 871.65 405.7 L977.06 471.13 A11.5 11.5 0 0 1 982.5 480.9 L982.5 496 A11.5 11.5 0 0 1 971 507.5 L811 507.5 A11.5 11.5 0 0 1 799.5 496Z" class="ic"/>
<path d="M811 496H831M811 496H791M811 496V516M811 496V476" class="cl" stroke-dasharray="2.7 1.5 0.6 1.5" stroke-dashoffset="1.35"/>
<circle cx="811" cy="496" r="1.25" fill="#a00000"/>
<circle cx="811" cy="496" r="4" class="ho"/>
<path d="M811 416H831M811 416H791M811 416V436M811 416V396" class="cl" stroke-dasharray="2.7 1.5 0.6 1.5" stroke-dashoffset="1.35"/>
<circle cx="811" cy="416" r="1.25" fill="#a00000"/>
<circle cx="811" cy="416" r="4" class="ho"/>
<path d="M971 496H991M971 496H951M971 496V516M971 496V476" class="cl" stroke-dasharray="2.7 1.5 0.6 1.5" stroke-dashoffset="1.35"/>
<circle cx="971" cy="496" r="1.25" fill="#a00000"/>
<circle cx="971" cy="496" r="4" class="ho"/>
<path d="M859 436H880M859 436H838M859 436V457M859 436V415" class="cl" stroke-dasharray="3.6 1.9 0.6 1.9" stroke-dashoffset="1.8"/>
<circle cx="859" cy="436" r="1.25" fill="#a00000"/>
<circle cx="859" cy="436" r="12.48" class="ho"/>
<path d="M923 476H944M923 476H902M923 476V497M923 476V455" class="cl" stroke-dasharray="3.6 1.9 0.6 1.9" stroke-dashoffset="1.8"/>
<circle cx="923" cy="476" r="1.25" fill="#a00000"/>
<circle cx="923" cy="476" r="12.48" class="ho"/>
<path d="M795 376 L795 296 A16 16 0 0 1 811 280 L867.58 280 A12 12 0 0 1 873.91 281.8 L979.44 347.31 A16 16 0 0 1 987 360.9 L987 376 A16 16 0 0 1 971 392 L811 392 A16 16 0 0 1 795 376Z" class="oc"/>
<path d="M799.5 376 L799.5 296 A11.5 11.5 0 0 1 811 284.5 L867.44 284.5 A8 8 0 0 1 871.65 285.7 L977.06 351.13 A11.5 11.5 0 0 1 982.5 360.9 L982.5 376 A11.5 11.5 0 0 1 971 387.5 L811 387.5 A11.5 11.5 0 0 1 799.5 376Z" class="ic"/>
<path d="M811 376H831M811 376H791M811 376V396M811 376V356" class="cl" stroke-dasharray="2.7 1.5 0.6 1.5" stroke-dashoffset="1.35"/>
<circle cx="811" cy="376" r="1.25" fill="#a00000"/>
<circle cx="811" cy="376" r="4" class="ho"/>
<path d="M811 296H831M811 296H791M811 296V316M811 296V276" class="cl" stroke-dasharray="2.7 1.5 0.6 1.5" stroke-dashoffset="1.35"/>
<circle cx="811" cy="296" r="1.25" fill="#a00000"/>
<circle cx="811" cy="296" r="4" class="ho"/>
<path d="M971 376H991M971 376H951M971 376V396M971 376V356" class="cl" stroke-dasharray="2.7 1.5 0.6 1.5" stroke-dashoffset="1.35"/>
<circle cx="971" cy="376" r="1.25" fill="#a00000"/>
<circle cx="971" cy="376" r="4" class="ho"/>
<path d="M859 316H880M859 316H838M859 316V337M859 316V295" class="cl" stroke-dasharray="3.6 1.9 0.6 1.9" stroke-dashoffset="1.8"/>
<circle cx="859" cy="316" r="1.25" fill="#a00000"/>
<circle cx="859" cy="316" r="12.48" class="ho"/>
<path d="M923 356H944M923 356H902M923 356V377M923 356V335" class="cl" stroke-dasharray="3.6 1.9 0.6 1.9" stroke-dashoffset="1.8"/>
<circle cx="923" cy="356" r="1.25" fill="#a00000"/>
<circle cx="923" cy="356" r="12.48" class="ho"/>
<path d="M175 632H215M195 612V652" stroke="#5a0606" stroke-width="2"/>
<circle cx="154.5" cy="512" r="5" fill="none" stroke="#a00000" stroke-width="1.2"/><path d="M149.5 512H159.5M154.5 507V517" stroke="#a00000" stroke-width="1"/>
</g></svg><svg class="a" style="left:350px;top:627px" width="90" height="90" viewBox="0 0 90 90"><defs><radialGradient id="rg" cx="45" cy="45" r="40" gradientUnits="userSpaceOnUse"><stop offset="0.76" stop-color="#1c242c" stop-opacity="0"/><stop offset="0.79" stop-color="#2c3842"/><stop offset="0.86" stop-color="#4e5e6b"/><stop offset="0.93" stop-color="#607280"/><stop offset="0.975" stop-color="#6a7c8a"/><stop offset="1" stop-color="#4a5866" stop-opacity="0.5"/></radialGradient></defs><circle cx="45" cy="45" r="39.5" fill="url(#rg)"/><g transform="translate(44.5 44.2)" stroke-linejoin="round"><path d="M0.8 1.8V22L6 17.3L10.4 27.2L14.4 25.5L10.2 16.6H16.5Z" fill="#fff" stroke="#fff" stroke-width="3.6"/><path d="M0.8 1.8V22L6 17.3L10.4 27.2L14.4 25.5L10.2 16.6H16.5Z" fill="#fff" stroke="#000" stroke-width="1.5"/></g></svg>
<div class="a ldk"></div>
<div class="a" style="left:1155px;top:106px;width:299px;height:2px;background:#c4c4c4"></div>
<div class="a" style="left:1155px;top:108px;width:299px;height:22px;background:linear-gradient(#ececec,#dadada);border-left:1px solid #c8c8c8"></div>
<div class="a" style="left:1155px;top:112px;width:299px;text-align:center;font-size:12px;line-height:15px;color:#333;padding-left:38px">Elenco dei livelli</div>
<svg class="a" style="left:1156px;top:110px" width="34" height="16"><circle cx="8" cy="8" r="7" fill="#6e6e6e"/><path d="M5.2 5.2L10.8 10.8M10.8 5.2L5.2 10.8" stroke="#e6e6e6" stroke-width="1.8"/><circle cx="26" cy="8" r="7" fill="#6e6e6e"/><rect x="22.5" y="7.2" width="5.5" height="4.3" fill="none" stroke="#e6e6e6" stroke-width="1.1"/><path d="M24.5 7.2V5h5.2v4.3h-1.7" fill="none" stroke="#e6e6e6" stroke-width="1.1"/></svg>
<div class="a" style="left:1155px;top:130px;width:60px;height:26px;background:linear-gradient(#f7f7f7,#ececec);border:1px solid #c4c4c4;border-bottom:2px solid #bdbdbd"></div>
<div class="a" style="left:1215px;top:130px;width:60px;height:26px;background:linear-gradient(#f7f7f7,#ececec);border:1px solid #c4c4c4;border-bottom:2px solid #bdbdbd"></div>
<div class="a" style="left:1275px;top:130px;width:60px;height:26px;background:linear-gradient(#f7f7f7,#ececec);border:1px solid #c4c4c4;border-bottom:2px solid #bdbdbd"></div>
<div class="a" style="left:1335px;top:130px;width:60px;height:26px;background:linear-gradient(#f7f7f7,#ececec);border:1px solid #c4c4c4;border-bottom:2px solid #bdbdbd"></div>
<div class="a" style="left:1395px;top:130px;width:59px;height:26px;background:linear-gradient(#f7f7f7,#ececec);border:1px solid #c4c4c4;border-bottom:2px solid #bdbdbd"></div>
<svg class="a" style="left:1177px;top:137.5px" width="16" height="11" viewBox="0 0 16 11"><path d="M0.5 5.5C3 1.2 5.5 0.3 8 0.3S13 1.2 15.5 5.5C13 9.8 10.5 10.7 8 10.7S3 9.8 0.5 5.5Z" fill="#000"/><path d="M2.6 5.2C4.5 2.6 6.2 2.1 8 2.1S11.5 2.6 13.4 5.2C11.5 7.4 10 7.9 8 7.9S4.5 7.4 2.6 5.2Z" fill="#fff"/><circle cx="8" cy="5" r="3" fill="#000"/><circle cx="7" cy="4" r="0.9" fill="#fff"/></svg>
<svg class="a" style="left:1237px;top:137.5px" width="16" height="11" viewBox="0 0 16 11"><path d="M0.5 5.5C3 1.2 5.5 0.3 8 0.3S13 1.2 15.5 5.5C13 9.8 10.5 10.7 8 10.7S3 9.8 0.5 5.5Z" fill="#b4b4b4"/><path d="M2.6 5.2C4.5 2.6 6.2 2.1 8 2.1S11.5 2.6 13.4 5.2C11.5 7.4 10 7.9 8 7.9S4.5 7.4 2.6 5.2Z" fill="#fff"/><circle cx="8" cy="5" r="3" fill="#b4b4b4"/><circle cx="7" cy="4" r="0.9" fill="#fff"/></svg>
<svg class="a" style="left:1298px;top:136px" width="14" height="14"><path d="M7 1V13M1 7H13" stroke="#e00000" stroke-width="3"/></svg>
<svg class="a" style="left:1358px;top:136px" width="14" height="14"><path d="M1 7H13" stroke="#e00000" stroke-width="3"/></svg>
<svg class="a" style="left:1417px;top:135px" width="16" height="16" viewBox="0 0 16 16"><path d="M1 15L2.2 11.2L12.2 1.2L14.8 3.8L4.8 13.8Z" fill="#e8a33a" stroke="#8a5a10" stroke-width="0.6"/><path d="M12.2 1.2L14.8 3.8L13.6 5L11 2.4Z" fill="#e23030"/><path d="M1 15L2.2 11.2L4.8 13.8Z" fill="#f2d7a8"/><path d="M1 15l0.6-1.8l1.2 1.2z" fill="#333"/></svg>
<div class="a" style="left:1156px;top:156px;width:298px;height:642px;background:#fff;border-right:1px solid #c8c8c8"></div>
<div class="a" style="left:1161px;top:163.3px;width:16px;height:9px;background:#fff;border:1px solid #000"></div>
<div class="a" style="left:1183px;top:159.8px;font-size:13.4px;line-height:16px;color:#111">0</div>
<svg class="a" style="left:1415px;top:162.3px" width="16" height="11" viewBox="0 0 16 11"><path d="M0.5 5.5C3 1.2 5.5 0.3 8 0.3S13 1.2 15.5 5.5C13 9.8 10.5 10.7 8 10.7S3 9.8 0.5 5.5Z" fill="#000"/><path d="M2.6 5.2C4.5 2.6 6.2 2.1 8 2.1S11.5 2.6 13.4 5.2C11.5 7.4 10 7.9 8 7.9S4.5 7.4 2.6 5.2Z" fill="#fff"/><circle cx="8" cy="5" r="3" fill="#000"/><circle cx="7" cy="4" r="0.9" fill="#fff"/></svg>
<svg class="a" style="left:1439.5px;top:160.8px" width="11" height="14" viewBox="0 0 11 14"><path d="M2.2 7V4.5A3.3 3.3 0 0 1 8.8 4.5V7" fill="none" stroke="#bdbdbd" stroke-width="1.6"/><rect x="0.5" y="6.5" width="10" height="7" fill="#bdbdbd"/></svg>
<div class="a" style="left:1161px;top:183.3px;width:16px;height:9px;background:#f00;border:1px solid #000"></div>
<div class="a" style="left:1183px;top:179.8px;font-size:13.4px;line-height:16px;color:#111">Centro</div>
<svg class="a" style="left:1415px;top:182.3px" width="16" height="11" viewBox="0 0 16 11"><path d="M0.5 5.5C3 1.2 5.5 0.3 8 0.3S13 1.2 15.5 5.5C13 9.8 10.5 10.7 8 10.7S3 9.8 0.5 5.5Z" fill="#000"/><path d="M2.6 5.2C4.5 2.6 6.2 2.1 8 2.1S11.5 2.6 13.4 5.2C11.5 7.4 10 7.9 8 7.9S4.5 7.4 2.6 5.2Z" fill="#fff"/><circle cx="8" cy="5" r="3" fill="#000"/><circle cx="7" cy="4" r="0.9" fill="#fff"/></svg>
<svg class="a" style="left:1439.5px;top:180.8px" width="11" height="14" viewBox="0 0 11 14"><path d="M2.2 7V4.5A3.3 3.3 0 0 1 8.8 4.5V7" fill="none" stroke="#bdbdbd" stroke-width="1.6"/><rect x="0.5" y="6.5" width="10" height="7" fill="#bdbdbd"/></svg>
<div class="a" style="left:1161px;top:203.3px;width:16px;height:9px;background:#000;border:1px solid #000"></div>
<div class="a" style="left:1183px;top:199.8px;font-size:13.4px;line-height:16px;color:#111">Sottile</div>
<svg class="a" style="left:1415px;top:202.3px" width="16" height="11" viewBox="0 0 16 11"><path d="M0.5 5.5C3 1.2 5.5 0.3 8 0.3S13 1.2 15.5 5.5C13 9.8 10.5 10.7 8 10.7S3 9.8 0.5 5.5Z" fill="#000"/><path d="M2.6 5.2C4.5 2.6 6.2 2.1 8 2.1S11.5 2.6 13.4 5.2C11.5 7.4 10 7.9 8 7.9S4.5 7.4 2.6 5.2Z" fill="#fff"/><circle cx="8" cy="5" r="3" fill="#000"/><circle cx="7" cy="4" r="0.9" fill="#fff"/></svg>
<svg class="a" style="left:1439.5px;top:200.8px" width="11" height="14" viewBox="0 0 11 14"><path d="M2.2 7V4.5A3.3 3.3 0 0 1 8.8 4.5V7" fill="none" stroke="#bdbdbd" stroke-width="1.6"/><rect x="0.5" y="6.5" width="10" height="7" fill="#bdbdbd"/></svg>
<div class="a" style="left:1161px;top:223.3px;width:16px;height:9px;background:#000;border:1px solid #000"></div>
<div class="a" style="left:1183px;top:219.8px;font-size:13.4px;line-height:16px;color:#111">Visibile</div>
<svg class="a" style="left:1415px;top:222.3px" width="16" height="11" viewBox="0 0 16 11"><path d="M0.5 5.5C3 1.2 5.5 0.3 8 0.3S13 1.2 15.5 5.5C13 9.8 10.5 10.7 8 10.7S3 9.8 0.5 5.5Z" fill="#000"/><path d="M2.6 5.2C4.5 2.6 6.2 2.1 8 2.1S11.5 2.6 13.4 5.2C11.5 7.4 10 7.9 8 7.9S4.5 7.4 2.6 5.2Z" fill="#fff"/><circle cx="8" cy="5" r="3" fill="#000"/><circle cx="7" cy="4" r="0.9" fill="#fff"/></svg>
<svg class="a" style="left:1439.5px;top:220.8px" width="11" height="14" viewBox="0 0 11 14"><path d="M2.2 7V4.5A3.3 3.3 0 0 1 8.8 4.5V7" fill="none" stroke="#bdbdbd" stroke-width="1.6"/><rect x="0.5" y="6.5" width="10" height="7" fill="#bdbdbd"/></svg>
<svg class="a" style="left:1393px;top:219px" width="16" height="16" viewBox="0 0 16 16"><path d="M1 15L2.2 11.2L12.2 1.2L14.8 3.8L4.8 13.8Z" fill="#e8a33a" stroke="#8a5a10" stroke-width="0.6"/><path d="M12.2 1.2L14.8 3.8L13.6 5L11 2.4Z" fill="#e23030"/><path d="M1 15L2.2 11.2L4.8 13.8Z" fill="#f2d7a8"/><path d="M1 15l0.6-1.8l1.2 1.2z" fill="#333"/></svg>
<div class="a rdock"></div>
<svg class="a" style="left:1454px;top:108px" width="46" height="690" viewBox="1454 108 46 690">
<defs><linearGradient id="rdbg" x1="0" y1="0" x2="1" y2="0"><stop offset="0" stop-color="#f0f0f0"/><stop offset="0.6" stop-color="#dcdcdc"/><stop offset="1" stop-color="#c4c4c4"/></linearGradient></defs>
<rect x="1454" y="108" width="46" height="690" fill="url(#rdbg)"/>
<rect x="1454" y="108" width="1.2" height="690" fill="#c8c8c8"/>
<rect x="1462" y="116" width="2" height="2" fill="#a8a8a8"/>
<rect x="1468" y="116" width="2" height="2" fill="#a8a8a8"/>
<rect x="1474" y="116" width="2" height="2" fill="#a8a8a8"/>
<rect x="1480" y="116" width="2" height="2" fill="#a8a8a8"/>
<rect x="1486" y="116" width="2" height="2" fill="#a8a8a8"/>
<rect x="1456.3" y="120" width="42.5" height="42.3" rx="6" fill="#b4b4b4"/>
<rect x="1456.3" y="416.8" width="43" height="42.9" rx="6" fill="#b4b4b4"/>
<path d="M1458 261.6H1500M1458 409.6H1500" stroke="#777" stroke-width="1" stroke-dasharray="1 2"/>
<rect x="1463.5" y="127.4" width="27.3" height="27.2" fill="#fff" stroke="#333" stroke-width="1"/><rect x="1463.5" y="127.4" width="27.3" height="4" fill="#000"/><rect x="1464.7" y="128.1" width="3" height="2.6" fill="#fff"/>
<path d="M1470.5 138.5L1475.5 135.8V147.5L1470.5 150.2Z" fill="#888" stroke="#555" stroke-width="0.6"/><path d="M1473 137.5L1484 132.5V145L1473 150Z" fill="#f4f4f4" stroke="#666" stroke-width="0.7"/><path d="M1476.5 146L1481.5 137.5V145.5Z" fill="none" stroke="#f05050" stroke-width="0.9"/>
<rect x="1463.5" y="174.2" width="27.3" height="27.2" fill="#fff" stroke="#333" stroke-width="1"/><rect x="1463.5" y="174.2" width="27.3" height="4" fill="#000"/><rect x="1464.7" y="174.89999999999998" width="3" height="2.6" fill="#fff"/>
<rect x="1470.5" y="183.5" width="10.5" height="8" fill="#f4ecc8" stroke="#777" stroke-width="0.7"/><circle cx="1479" cy="191.5" r="4.5" fill="#f4ecc8" fill-opacity="0.85" stroke="#777" stroke-width="0.7"/>
<rect x="1463.5" y="220.1" width="27.3" height="27.2" fill="#fff" stroke="#333" stroke-width="1"/><rect x="1463.5" y="220.1" width="27.3" height="4" fill="#000"/><rect x="1464.7" y="220.79999999999998" width="3" height="2.6" fill="#fff"/>
<rect x="1469" y="230.5" width="16.5" height="11.5" rx="2.5" fill="#f8f8f8" stroke="#b8c8e0" stroke-width="0.8"/>
<rect x="1463.5" y="276.5" width="27.3" height="27.2" fill="#fff" stroke="#333" stroke-width="1"/><rect x="1463.5" y="276.5" width="27.3" height="4" fill="#000"/><rect x="1464.7" y="277.2" width="3" height="2.6" fill="#fff"/>
<rect x="1467" y="285.5" width="3.5" height="3" rx="0.8" fill="#000"/><rect x="1473" y="285.5" width="14" height="3" fill="#fff" stroke="#444" stroke-width="0.6"/>
<rect x="1467" y="291.5" width="3.5" height="3" rx="0.8" fill="#000"/><rect x="1473" y="291.5" width="14" height="3" fill="#fff" stroke="#444" stroke-width="0.6"/>
<rect x="1467" y="297.5" width="3.5" height="3" rx="0.8" fill="#000"/><rect x="1473" y="297.5" width="14" height="3" fill="#fff" stroke="#444" stroke-width="0.6"/>
<rect x="1463.5" y="322.4" width="27.3" height="27.2" fill="#fff" stroke="#333" stroke-width="1"/><rect x="1463.5" y="322.4" width="27.3" height="4" fill="#000"/><rect x="1464.7" y="323.09999999999997" width="3" height="2.6" fill="#fff"/>
<path d="M1470 331.5Q1477 329.5 1484 331.5L1478.5 338.5V345L1476 343.5V338.5Z" fill="#9a9a9a" stroke="#444" stroke-width="0.6"/><ellipse cx="1477" cy="331.7" rx="7" ry="1.3" fill="#666"/>
<rect x="1463.5" y="368.4" width="27.3" height="27.2" fill="#fff" stroke="#333" stroke-width="1"/><rect x="1463.5" y="368.4" width="27.3" height="4" fill="#000"/><rect x="1464.7" y="369.09999999999997" width="3" height="2.6" fill="#fff"/>
<path d="M1469 379.5L1473.5 382V389.5L1469 392Z" fill="#ddd" stroke="#333" stroke-width="0.7"/><rect x="1473.5" y="381" width="11" height="9" rx="2" fill="#777"/><rect x="1473.5" y="381.5" width="3.5" height="8" fill="#eee"/><path d="M1467.5 385.7H1487" stroke="#f08080" stroke-width="0.8" stroke-dasharray="1.5 1"/>
<rect x="1463.5" y="424.3" width="27.3" height="27.2" fill="#fff" stroke="#333" stroke-width="1"/><rect x="1463.5" y="424.3" width="27.3" height="4" fill="#000"/><rect x="1464.7" y="425.0" width="3" height="2.6" fill="#fff"/>
<path d="M1466 431H1476M1466 434H1474M1466 437H1476M1466 440H1477" stroke="#aaa" stroke-width="0.8"/><path d="M1463.5 446.5H1490.8" stroke="#333" stroke-width="0.8"/><path d="M1470 449.5H1488" stroke="#888" stroke-width="0.9"/>
<rect x="1463.5" y="471.5" width="27.3" height="27.2" fill="#fff" stroke="#333" stroke-width="1"/><rect x="1463.5" y="471.5" width="27.3" height="4" fill="#000"/><rect x="1464.7" y="472.2" width="3" height="2.6" fill="#fff"/>
<rect x="1471" y="479.5" width="12.5" height="14.5" rx="1" fill="#c8821e" stroke="#8a5a10" stroke-width="0.5"/><rect x="1472.5" y="481" width="9.5" height="11.5" fill="#f0f0f0"/><rect x="1474.5" y="478.5" width="5.5" height="2.5" rx="0.8" fill="#888"/><path d="M1474 484H1480M1474 486H1480M1474 488H1478" stroke="#bbb" stroke-width="0.6"/>
</svg>
<div class="a status"></div>
<div class="a" style="left:2px;top:807px;font-size:9.5px;line-height:12px;color:#1a1a1a;letter-spacing:0.3px">50,-10</div>
<div class="a" style="left:2px;top:827px;font-size:9.5px;line-height:12px;color:#1a1a1a;letter-spacing:0.3px">@60,-40</div>
<div class="a" style="left:254px;top:802px;width:1px;height:40px;background:#9a9a9a"></div>
<div class="a" style="left:256px;top:807px;font-size:9.5px;line-height:12px;color:#1a1a1a;letter-spacing:0.3px;letter-spacing:0.6px">50.9902&lt;349°</div>
<div class="a" style="left:256px;top:827px;font-size:9.5px;line-height:12px;color:#1a1a1a;letter-spacing:0.3px;letter-spacing:0.6px">@72.111&lt;326°</div>
<div class="a" style="left:506px;top:819px;width:7px;height:7px;border-radius:50%;background:#c6c6c6"></div>
<div class="a" style="left:571.5px;top:817px;font-size:9.5px;line-height:12px;color:#1a1a1a;letter-spacing:0.3px;letter-spacing:0.3px">Selezionare entità o regione</div>
<svg class="a" style="left:716px;top:805px" width="20" height="32" viewBox="0 0 20 32"><rect x="1.5" y="1.5" width="17" height="29" rx="8.5" fill="#fff" stroke="#333" stroke-width="1"/><path d="M1.5 13.5Q10 10.5 18.5 13.5" fill="none" stroke="#333" stroke-width="1"/><path d="M10 1.5V11.8" stroke="#333" stroke-width="1"/><rect x="8.3" y="4.5" width="3.4" height="6" rx="1.7" fill="#fff" stroke="#333" stroke-width="0.9"/></svg>
<div class="a" style="left:940px;top:818px;width:7px;height:7px;border-radius:50%;background:#c6c6c6"></div>
<div class="a" style="left:949px;top:816.5px;font-size:9.5px;line-height:12px;color:#1a1a1a;letter-spacing:0.3px;letter-spacing:0.31px">Nessun entità selezionate.</div>
<div class="a" style="left:1269px;top:818px;width:7px;height:7px;border-radius:50%;background:#c6c6c6"></div>
</body></html>
